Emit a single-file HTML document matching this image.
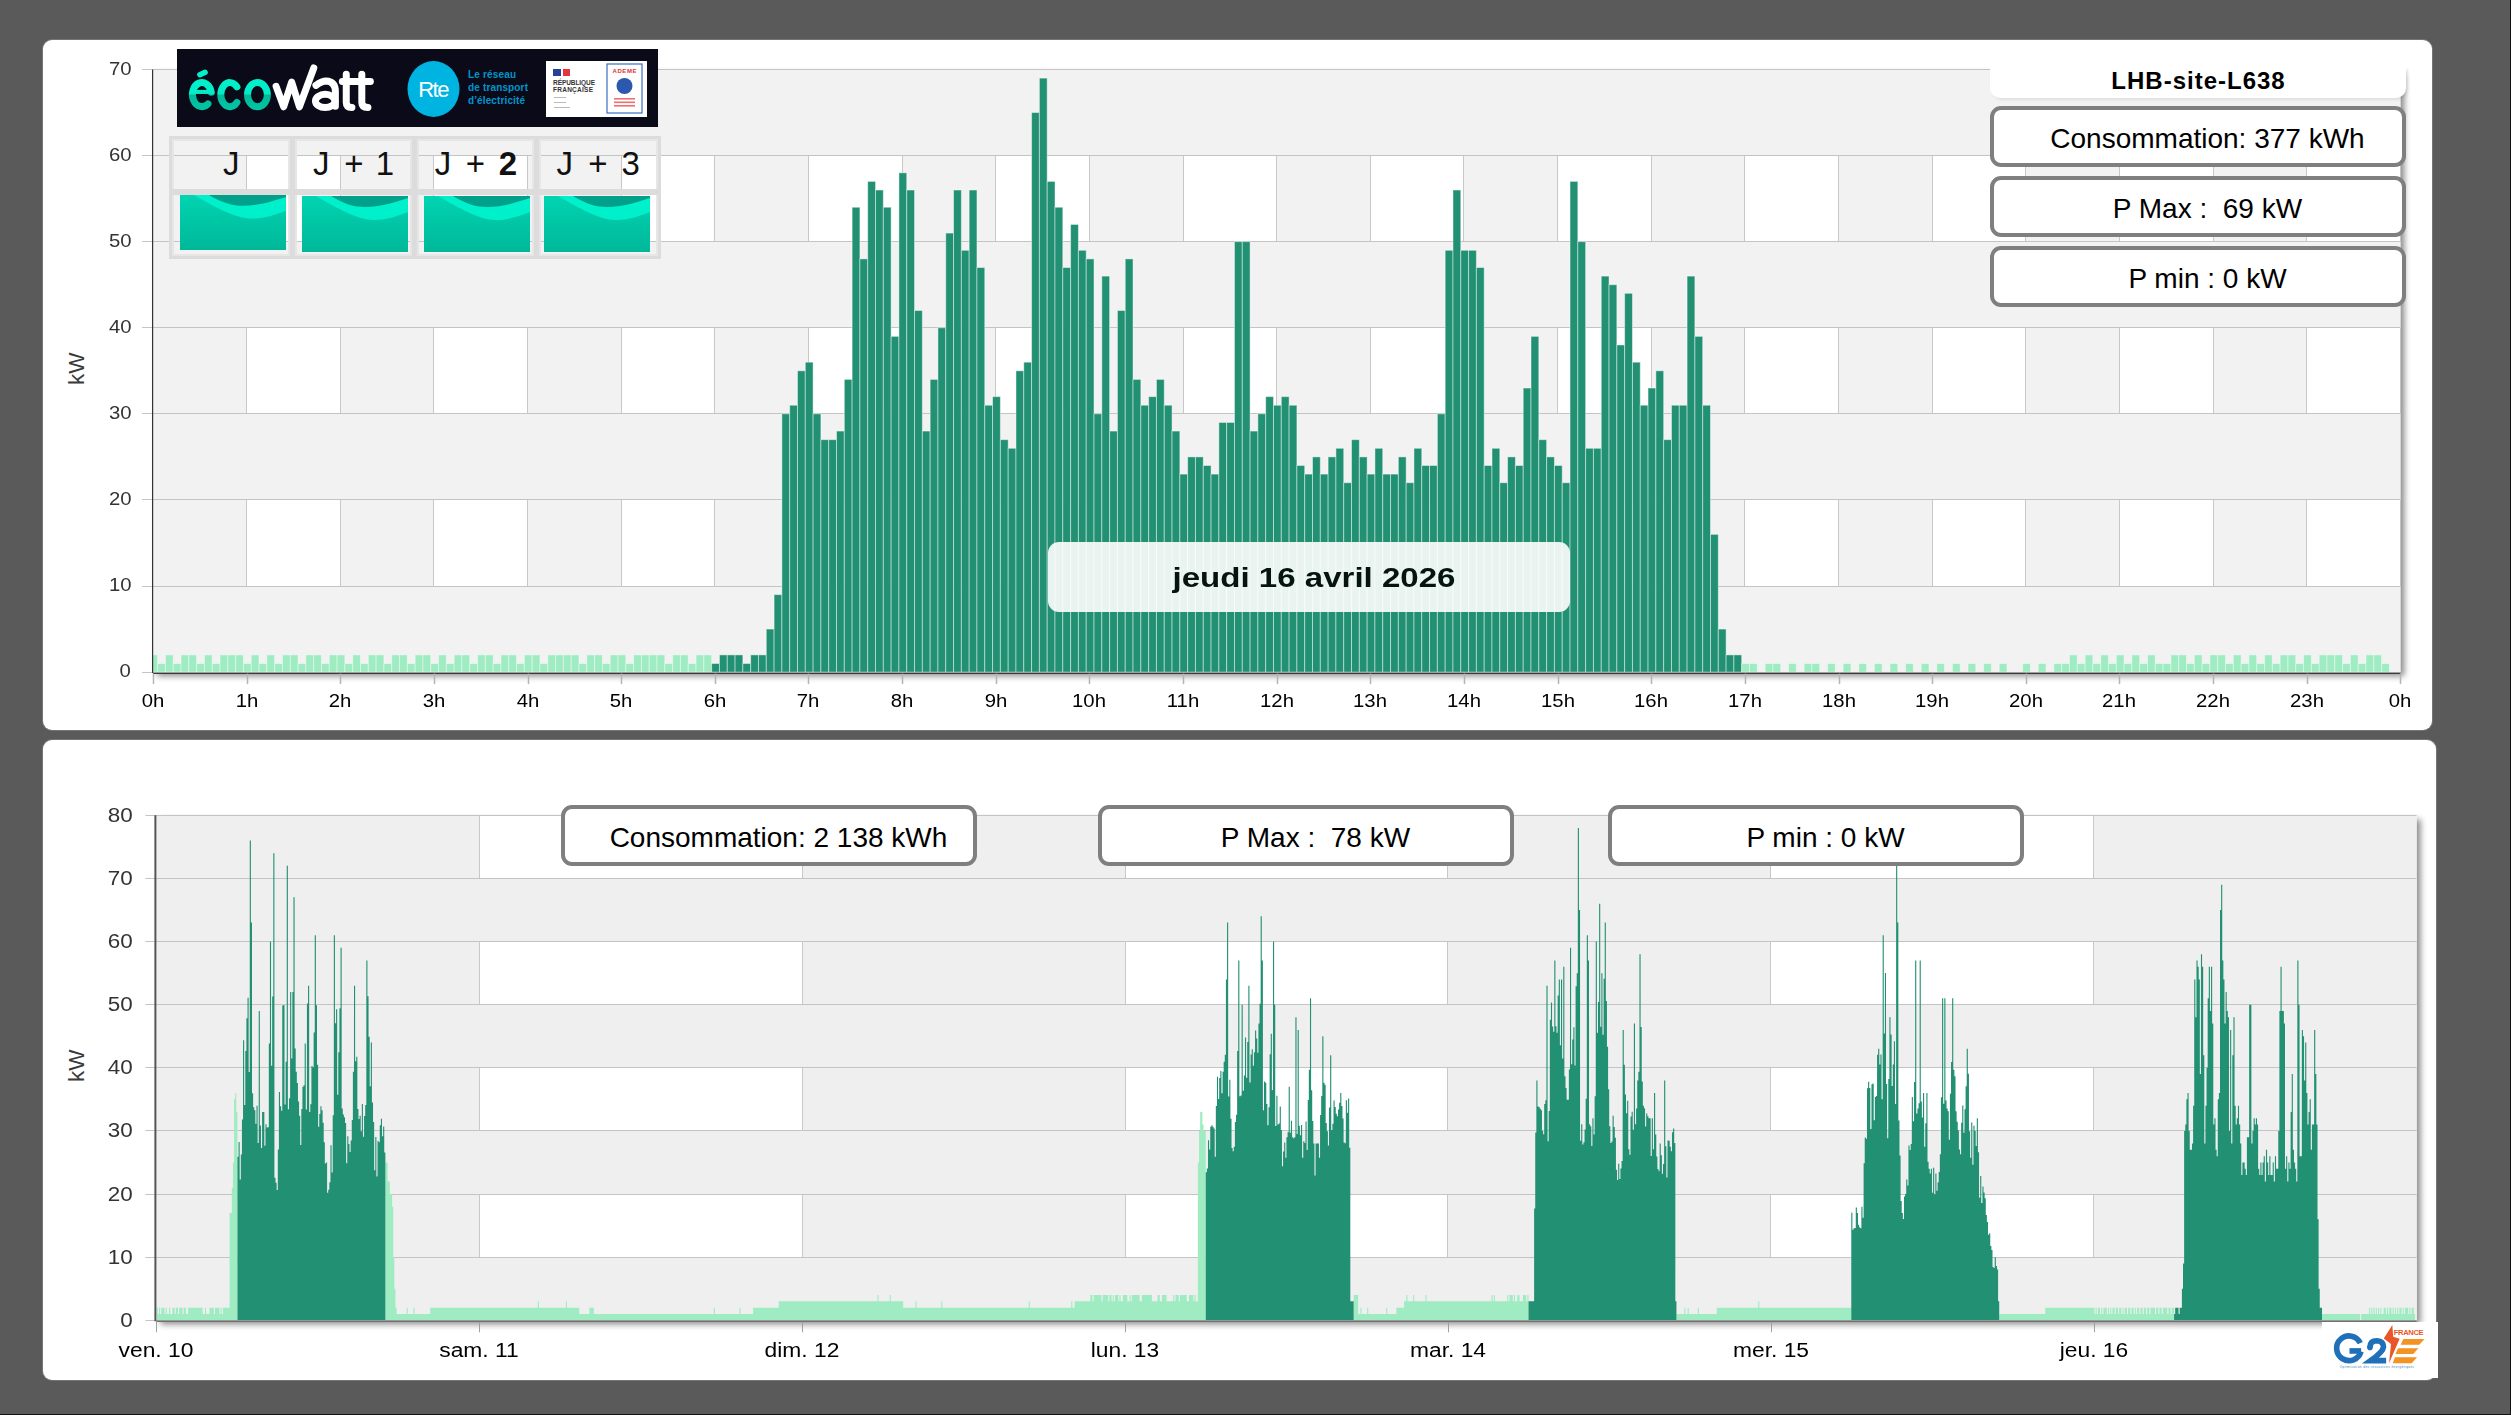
<!DOCTYPE html>
<html><head><meta charset="utf-8"><title>Consommation</title>
<style>
html,body{margin:0;padding:0;}
body{width:2511px;height:1415px;background:#5a5a5a;position:relative;overflow:hidden;font-family:"Liberation Sans",sans-serif;}
.panel{position:absolute;background:#fff;border-radius:9px;box-shadow:0 0 0 1px rgba(140,140,140,0.55);}
.abs{position:absolute;}
.box{position:absolute;box-sizing:border-box;border:4px solid #7f7f7f;border-radius:11px;background:#fff;text-align:center;color:#000;font-size:27px;}
.lbl{position:absolute;font-size:18px;color:#333;white-space:nowrap;}
</style></head><body>

<div class="abs" style="left:0;top:1414px;width:2511px;height:1px;background:#111"></div>
<div class="abs" style="left:2510px;top:0;width:1px;height:1415px;background:#111"></div>
<div class="panel" style="left:43px;top:40px;width:2389px;height:690px"></div>
<div class="panel" style="left:43px;top:740px;width:2393px;height:640px"></div>
<svg class="abs" style="left:0;top:0" width="2511" height="740"><defs><filter id="sh" x="-0.05" y="-0.05" width="1.1" height="1.2"><feGaussianBlur stdDeviation="3"/></filter><clipPath id="tc"><rect x="153" y="69.5" width="2247.4" height="602.6"/></clipPath></defs><rect x="157" y="73.5" width="2247.4" height="602.6" fill="#000" opacity="0.45" filter="url(#sh)"/><rect x="153" y="69.5" width="2247.4" height="602.6" fill="#fff"/><rect x="153" y="69.5" width="93.64" height="602.6" fill="#f2f2f2"/><rect x="340.28" y="69.5" width="93.64" height="602.6" fill="#f2f2f2"/><rect x="527.57" y="69.5" width="93.64" height="602.6" fill="#f2f2f2"/><rect x="714.85" y="69.5" width="93.64" height="602.6" fill="#f2f2f2"/><rect x="902.13" y="69.5" width="93.64" height="602.6" fill="#f2f2f2"/><rect x="1089.42" y="69.5" width="93.64" height="602.6" fill="#f2f2f2"/><rect x="1276.7" y="69.5" width="93.64" height="602.6" fill="#f2f2f2"/><rect x="1463.98" y="69.5" width="93.64" height="602.6" fill="#f2f2f2"/><rect x="1651.27" y="69.5" width="93.64" height="602.6" fill="#f2f2f2"/><rect x="1838.55" y="69.5" width="93.64" height="602.6" fill="#f2f2f2"/><rect x="2025.83" y="69.5" width="93.64" height="602.6" fill="#f2f2f2"/><rect x="2213.12" y="69.5" width="93.64" height="602.6" fill="#f2f2f2"/><line x1="246.5" y1="69.5" x2="246.5" y2="672.1" stroke="#c8c8c8" stroke-width="1"/><line x1="340.5" y1="69.5" x2="340.5" y2="672.1" stroke="#c8c8c8" stroke-width="1"/><line x1="433.5" y1="69.5" x2="433.5" y2="672.1" stroke="#c8c8c8" stroke-width="1"/><line x1="527.5" y1="69.5" x2="527.5" y2="672.1" stroke="#c8c8c8" stroke-width="1"/><line x1="621.5" y1="69.5" x2="621.5" y2="672.1" stroke="#c8c8c8" stroke-width="1"/><line x1="714.5" y1="69.5" x2="714.5" y2="672.1" stroke="#c8c8c8" stroke-width="1"/><line x1="808.5" y1="69.5" x2="808.5" y2="672.1" stroke="#c8c8c8" stroke-width="1"/><line x1="902.5" y1="69.5" x2="902.5" y2="672.1" stroke="#c8c8c8" stroke-width="1"/><line x1="995.5" y1="69.5" x2="995.5" y2="672.1" stroke="#c8c8c8" stroke-width="1"/><line x1="1089.5" y1="69.5" x2="1089.5" y2="672.1" stroke="#c8c8c8" stroke-width="1"/><line x1="1183.5" y1="69.5" x2="1183.5" y2="672.1" stroke="#c8c8c8" stroke-width="1"/><line x1="1276.5" y1="69.5" x2="1276.5" y2="672.1" stroke="#c8c8c8" stroke-width="1"/><line x1="1370.5" y1="69.5" x2="1370.5" y2="672.1" stroke="#c8c8c8" stroke-width="1"/><line x1="1463.5" y1="69.5" x2="1463.5" y2="672.1" stroke="#c8c8c8" stroke-width="1"/><line x1="1557.5" y1="69.5" x2="1557.5" y2="672.1" stroke="#c8c8c8" stroke-width="1"/><line x1="1651.5" y1="69.5" x2="1651.5" y2="672.1" stroke="#c8c8c8" stroke-width="1"/><line x1="1744.5" y1="69.5" x2="1744.5" y2="672.1" stroke="#c8c8c8" stroke-width="1"/><line x1="1838.5" y1="69.5" x2="1838.5" y2="672.1" stroke="#c8c8c8" stroke-width="1"/><line x1="1932.5" y1="69.5" x2="1932.5" y2="672.1" stroke="#c8c8c8" stroke-width="1"/><line x1="2025.5" y1="69.5" x2="2025.5" y2="672.1" stroke="#c8c8c8" stroke-width="1"/><line x1="2119.5" y1="69.5" x2="2119.5" y2="672.1" stroke="#c8c8c8" stroke-width="1"/><line x1="2213.5" y1="69.5" x2="2213.5" y2="672.1" stroke="#c8c8c8" stroke-width="1"/><line x1="2306.5" y1="69.5" x2="2306.5" y2="672.1" stroke="#c8c8c8" stroke-width="1"/><rect x="153" y="586.01" width="2247.4" height="86.09" fill="#f2f2f2"/><rect x="153" y="413.84" width="2247.4" height="86.09" fill="#f2f2f2"/><rect x="153" y="241.67" width="2247.4" height="86.09" fill="#f2f2f2"/><rect x="153" y="69.5" width="2247.4" height="86.09" fill="#f2f2f2"/><line x1="142" y1="672.5" x2="2400.4" y2="672.5" stroke="#c4c4c4" stroke-width="1"/><line x1="142" y1="586.5" x2="2400.4" y2="586.5" stroke="#c4c4c4" stroke-width="1"/><line x1="142" y1="499.5" x2="2400.4" y2="499.5" stroke="#c4c4c4" stroke-width="1"/><line x1="142" y1="413.5" x2="2400.4" y2="413.5" stroke="#c4c4c4" stroke-width="1"/><line x1="142" y1="327.5" x2="2400.4" y2="327.5" stroke="#c4c4c4" stroke-width="1"/><line x1="142" y1="241.5" x2="2400.4" y2="241.5" stroke="#c4c4c4" stroke-width="1"/><line x1="142" y1="155.5" x2="2400.4" y2="155.5" stroke="#c4c4c4" stroke-width="1"/><line x1="142" y1="69.5" x2="2400.4" y2="69.5" stroke="#c4c4c4" stroke-width="1"/><g clip-path="url(#tc)"><rect x="149.8" y="654.88" width="7.8" height="17.22" fill="#a0ecc2" stroke="rgba(255,255,255,0.4)" stroke-width="1"/><rect x="157.6" y="663.49" width="7.8" height="8.61" fill="#a0ecc2" stroke="rgba(255,255,255,0.4)" stroke-width="1"/><rect x="165.41" y="654.88" width="7.8" height="17.22" fill="#a0ecc2" stroke="rgba(255,255,255,0.4)" stroke-width="1"/><rect x="173.21" y="663.49" width="7.8" height="8.61" fill="#a0ecc2" stroke="rgba(255,255,255,0.4)" stroke-width="1"/><rect x="181.01" y="654.88" width="7.8" height="17.22" fill="#a0ecc2" stroke="rgba(255,255,255,0.4)" stroke-width="1"/><rect x="188.82" y="654.88" width="7.8" height="17.22" fill="#a0ecc2" stroke="rgba(255,255,255,0.4)" stroke-width="1"/><rect x="196.62" y="663.49" width="7.8" height="8.61" fill="#a0ecc2" stroke="rgba(255,255,255,0.4)" stroke-width="1"/><rect x="204.42" y="654.88" width="7.8" height="17.22" fill="#a0ecc2" stroke="rgba(255,255,255,0.4)" stroke-width="1"/><rect x="212.23" y="663.49" width="7.8" height="8.61" fill="#a0ecc2" stroke="rgba(255,255,255,0.4)" stroke-width="1"/><rect x="220.03" y="654.88" width="7.8" height="17.22" fill="#a0ecc2" stroke="rgba(255,255,255,0.4)" stroke-width="1"/><rect x="227.83" y="654.88" width="7.8" height="17.22" fill="#a0ecc2" stroke="rgba(255,255,255,0.4)" stroke-width="1"/><rect x="235.64" y="654.88" width="7.8" height="17.22" fill="#a0ecc2" stroke="rgba(255,255,255,0.4)" stroke-width="1"/><rect x="243.44" y="663.49" width="7.8" height="8.61" fill="#a0ecc2" stroke="rgba(255,255,255,0.4)" stroke-width="1"/><rect x="251.24" y="654.88" width="7.8" height="17.22" fill="#a0ecc2" stroke="rgba(255,255,255,0.4)" stroke-width="1"/><rect x="259.05" y="663.49" width="7.8" height="8.61" fill="#a0ecc2" stroke="rgba(255,255,255,0.4)" stroke-width="1"/><rect x="266.85" y="654.88" width="7.8" height="17.22" fill="#a0ecc2" stroke="rgba(255,255,255,0.4)" stroke-width="1"/><rect x="274.65" y="663.49" width="7.8" height="8.61" fill="#a0ecc2" stroke="rgba(255,255,255,0.4)" stroke-width="1"/><rect x="282.46" y="654.88" width="7.8" height="17.22" fill="#a0ecc2" stroke="rgba(255,255,255,0.4)" stroke-width="1"/><rect x="290.26" y="654.88" width="7.8" height="17.22" fill="#a0ecc2" stroke="rgba(255,255,255,0.4)" stroke-width="1"/><rect x="298.06" y="663.49" width="7.8" height="8.61" fill="#a0ecc2" stroke="rgba(255,255,255,0.4)" stroke-width="1"/><rect x="305.87" y="654.88" width="7.8" height="17.22" fill="#a0ecc2" stroke="rgba(255,255,255,0.4)" stroke-width="1"/><rect x="313.67" y="654.88" width="7.8" height="17.22" fill="#a0ecc2" stroke="rgba(255,255,255,0.4)" stroke-width="1"/><rect x="321.47" y="663.49" width="7.8" height="8.61" fill="#a0ecc2" stroke="rgba(255,255,255,0.4)" stroke-width="1"/><rect x="329.28" y="654.88" width="7.8" height="17.22" fill="#a0ecc2" stroke="rgba(255,255,255,0.4)" stroke-width="1"/><rect x="337.08" y="654.88" width="7.8" height="17.22" fill="#a0ecc2" stroke="rgba(255,255,255,0.4)" stroke-width="1"/><rect x="344.89" y="663.49" width="7.8" height="8.61" fill="#a0ecc2" stroke="rgba(255,255,255,0.4)" stroke-width="1"/><rect x="352.69" y="654.88" width="7.8" height="17.22" fill="#a0ecc2" stroke="rgba(255,255,255,0.4)" stroke-width="1"/><rect x="360.49" y="663.49" width="7.8" height="8.61" fill="#a0ecc2" stroke="rgba(255,255,255,0.4)" stroke-width="1"/><rect x="368.3" y="654.88" width="7.8" height="17.22" fill="#a0ecc2" stroke="rgba(255,255,255,0.4)" stroke-width="1"/><rect x="376.1" y="654.88" width="7.8" height="17.22" fill="#a0ecc2" stroke="rgba(255,255,255,0.4)" stroke-width="1"/><rect x="383.9" y="663.49" width="7.8" height="8.61" fill="#a0ecc2" stroke="rgba(255,255,255,0.4)" stroke-width="1"/><rect x="391.71" y="654.88" width="7.8" height="17.22" fill="#a0ecc2" stroke="rgba(255,255,255,0.4)" stroke-width="1"/><rect x="399.51" y="654.88" width="7.8" height="17.22" fill="#a0ecc2" stroke="rgba(255,255,255,0.4)" stroke-width="1"/><rect x="407.31" y="663.49" width="7.8" height="8.61" fill="#a0ecc2" stroke="rgba(255,255,255,0.4)" stroke-width="1"/><rect x="415.12" y="654.88" width="7.8" height="17.22" fill="#a0ecc2" stroke="rgba(255,255,255,0.4)" stroke-width="1"/><rect x="422.92" y="654.88" width="7.8" height="17.22" fill="#a0ecc2" stroke="rgba(255,255,255,0.4)" stroke-width="1"/><rect x="430.72" y="663.49" width="7.8" height="8.61" fill="#a0ecc2" stroke="rgba(255,255,255,0.4)" stroke-width="1"/><rect x="438.53" y="654.88" width="7.8" height="17.22" fill="#a0ecc2" stroke="rgba(255,255,255,0.4)" stroke-width="1"/><rect x="446.33" y="663.49" width="7.8" height="8.61" fill="#a0ecc2" stroke="rgba(255,255,255,0.4)" stroke-width="1"/><rect x="454.13" y="654.88" width="7.8" height="17.22" fill="#a0ecc2" stroke="rgba(255,255,255,0.4)" stroke-width="1"/><rect x="461.94" y="654.88" width="7.8" height="17.22" fill="#a0ecc2" stroke="rgba(255,255,255,0.4)" stroke-width="1"/><rect x="469.74" y="663.49" width="7.8" height="8.61" fill="#a0ecc2" stroke="rgba(255,255,255,0.4)" stroke-width="1"/><rect x="477.54" y="654.88" width="7.8" height="17.22" fill="#a0ecc2" stroke="rgba(255,255,255,0.4)" stroke-width="1"/><rect x="485.35" y="654.88" width="7.8" height="17.22" fill="#a0ecc2" stroke="rgba(255,255,255,0.4)" stroke-width="1"/><rect x="493.15" y="663.49" width="7.8" height="8.61" fill="#a0ecc2" stroke="rgba(255,255,255,0.4)" stroke-width="1"/><rect x="500.95" y="654.88" width="7.8" height="17.22" fill="#a0ecc2" stroke="rgba(255,255,255,0.4)" stroke-width="1"/><rect x="508.76" y="654.88" width="7.8" height="17.22" fill="#a0ecc2" stroke="rgba(255,255,255,0.4)" stroke-width="1"/><rect x="516.56" y="663.49" width="7.8" height="8.61" fill="#a0ecc2" stroke="rgba(255,255,255,0.4)" stroke-width="1"/><rect x="524.36" y="654.88" width="7.8" height="17.22" fill="#a0ecc2" stroke="rgba(255,255,255,0.4)" stroke-width="1"/><rect x="532.17" y="654.88" width="7.8" height="17.22" fill="#a0ecc2" stroke="rgba(255,255,255,0.4)" stroke-width="1"/><rect x="539.97" y="663.49" width="7.8" height="8.61" fill="#a0ecc2" stroke="rgba(255,255,255,0.4)" stroke-width="1"/><rect x="547.78" y="654.88" width="7.8" height="17.22" fill="#a0ecc2" stroke="rgba(255,255,255,0.4)" stroke-width="1"/><rect x="555.58" y="654.88" width="7.8" height="17.22" fill="#a0ecc2" stroke="rgba(255,255,255,0.4)" stroke-width="1"/><rect x="563.38" y="654.88" width="7.8" height="17.22" fill="#a0ecc2" stroke="rgba(255,255,255,0.4)" stroke-width="1"/><rect x="571.19" y="654.88" width="7.8" height="17.22" fill="#a0ecc2" stroke="rgba(255,255,255,0.4)" stroke-width="1"/><rect x="578.99" y="663.49" width="7.8" height="8.61" fill="#a0ecc2" stroke="rgba(255,255,255,0.4)" stroke-width="1"/><rect x="586.79" y="654.88" width="7.8" height="17.22" fill="#a0ecc2" stroke="rgba(255,255,255,0.4)" stroke-width="1"/><rect x="594.6" y="654.88" width="7.8" height="17.22" fill="#a0ecc2" stroke="rgba(255,255,255,0.4)" stroke-width="1"/><rect x="602.4" y="663.49" width="7.8" height="8.61" fill="#a0ecc2" stroke="rgba(255,255,255,0.4)" stroke-width="1"/><rect x="610.2" y="654.88" width="7.8" height="17.22" fill="#a0ecc2" stroke="rgba(255,255,255,0.4)" stroke-width="1"/><rect x="618.01" y="654.88" width="7.8" height="17.22" fill="#a0ecc2" stroke="rgba(255,255,255,0.4)" stroke-width="1"/><rect x="625.81" y="663.49" width="7.8" height="8.61" fill="#a0ecc2" stroke="rgba(255,255,255,0.4)" stroke-width="1"/><rect x="633.61" y="654.88" width="7.8" height="17.22" fill="#a0ecc2" stroke="rgba(255,255,255,0.4)" stroke-width="1"/><rect x="641.42" y="654.88" width="7.8" height="17.22" fill="#a0ecc2" stroke="rgba(255,255,255,0.4)" stroke-width="1"/><rect x="649.22" y="654.88" width="7.8" height="17.22" fill="#a0ecc2" stroke="rgba(255,255,255,0.4)" stroke-width="1"/><rect x="657.02" y="654.88" width="7.8" height="17.22" fill="#a0ecc2" stroke="rgba(255,255,255,0.4)" stroke-width="1"/><rect x="664.83" y="663.49" width="7.8" height="8.61" fill="#a0ecc2" stroke="rgba(255,255,255,0.4)" stroke-width="1"/><rect x="672.63" y="654.88" width="7.8" height="17.22" fill="#a0ecc2" stroke="rgba(255,255,255,0.4)" stroke-width="1"/><rect x="680.43" y="654.88" width="7.8" height="17.22" fill="#a0ecc2" stroke="rgba(255,255,255,0.4)" stroke-width="1"/><rect x="688.24" y="663.49" width="7.8" height="8.61" fill="#a0ecc2" stroke="rgba(255,255,255,0.4)" stroke-width="1"/><rect x="696.04" y="654.88" width="7.8" height="17.22" fill="#a0ecc2" stroke="rgba(255,255,255,0.4)" stroke-width="1"/><rect x="703.84" y="654.88" width="7.8" height="17.22" fill="#a0ecc2" stroke="rgba(255,255,255,0.4)" stroke-width="1"/><rect x="711.65" y="663.49" width="7.8" height="8.61" fill="#229072" stroke="rgba(255,255,255,0.45)" stroke-width="1"/><rect x="719.45" y="654.88" width="7.8" height="17.22" fill="#229072" stroke="rgba(255,255,255,0.45)" stroke-width="1"/><rect x="727.26" y="654.88" width="7.8" height="17.22" fill="#229072" stroke="rgba(255,255,255,0.45)" stroke-width="1"/><rect x="735.06" y="654.88" width="7.8" height="17.22" fill="#229072" stroke="rgba(255,255,255,0.45)" stroke-width="1"/><rect x="742.86" y="663.49" width="7.8" height="8.61" fill="#229072" stroke="rgba(255,255,255,0.45)" stroke-width="1"/><rect x="750.67" y="654.88" width="7.8" height="17.22" fill="#229072" stroke="rgba(255,255,255,0.45)" stroke-width="1"/><rect x="758.47" y="654.88" width="7.8" height="17.22" fill="#229072" stroke="rgba(255,255,255,0.45)" stroke-width="1"/><rect x="766.27" y="629.06" width="7.8" height="43.04" fill="#229072" stroke="rgba(255,255,255,0.45)" stroke-width="1"/><rect x="774.08" y="594.62" width="7.8" height="77.48" fill="#229072" stroke="rgba(255,255,255,0.45)" stroke-width="1"/><rect x="781.88" y="413.84" width="7.8" height="258.26" fill="#229072" stroke="rgba(255,255,255,0.45)" stroke-width="1"/><rect x="789.68" y="405.23" width="7.8" height="266.87" fill="#229072" stroke="rgba(255,255,255,0.45)" stroke-width="1"/><rect x="797.49" y="370.8" width="7.8" height="301.3" fill="#229072" stroke="rgba(255,255,255,0.45)" stroke-width="1"/><rect x="805.29" y="362.19" width="7.8" height="309.91" fill="#229072" stroke="rgba(255,255,255,0.45)" stroke-width="1"/><rect x="813.09" y="413.84" width="7.8" height="258.26" fill="#229072" stroke="rgba(255,255,255,0.45)" stroke-width="1"/><rect x="820.9" y="439.67" width="7.8" height="232.43" fill="#229072" stroke="rgba(255,255,255,0.45)" stroke-width="1"/><rect x="828.7" y="439.67" width="7.8" height="232.43" fill="#229072" stroke="rgba(255,255,255,0.45)" stroke-width="1"/><rect x="836.5" y="431.06" width="7.8" height="241.04" fill="#229072" stroke="rgba(255,255,255,0.45)" stroke-width="1"/><rect x="844.31" y="379.41" width="7.8" height="292.69" fill="#229072" stroke="rgba(255,255,255,0.45)" stroke-width="1"/><rect x="852.11" y="207.24" width="7.8" height="464.86" fill="#229072" stroke="rgba(255,255,255,0.45)" stroke-width="1"/><rect x="859.91" y="258.89" width="7.8" height="413.21" fill="#229072" stroke="rgba(255,255,255,0.45)" stroke-width="1"/><rect x="867.72" y="181.41" width="7.8" height="490.69" fill="#229072" stroke="rgba(255,255,255,0.45)" stroke-width="1"/><rect x="875.52" y="190.02" width="7.8" height="482.08" fill="#229072" stroke="rgba(255,255,255,0.45)" stroke-width="1"/><rect x="883.32" y="207.24" width="7.8" height="464.86" fill="#229072" stroke="rgba(255,255,255,0.45)" stroke-width="1"/><rect x="891.13" y="336.37" width="7.8" height="335.73" fill="#229072" stroke="rgba(255,255,255,0.45)" stroke-width="1"/><rect x="898.93" y="172.8" width="7.8" height="499.3" fill="#229072" stroke="rgba(255,255,255,0.45)" stroke-width="1"/><rect x="906.74" y="190.02" width="7.8" height="482.08" fill="#229072" stroke="rgba(255,255,255,0.45)" stroke-width="1"/><rect x="914.54" y="310.54" width="7.8" height="361.56" fill="#229072" stroke="rgba(255,255,255,0.45)" stroke-width="1"/><rect x="922.34" y="431.06" width="7.8" height="241.04" fill="#229072" stroke="rgba(255,255,255,0.45)" stroke-width="1"/><rect x="930.15" y="379.41" width="7.8" height="292.69" fill="#229072" stroke="rgba(255,255,255,0.45)" stroke-width="1"/><rect x="937.95" y="327.76" width="7.8" height="344.34" fill="#229072" stroke="rgba(255,255,255,0.45)" stroke-width="1"/><rect x="945.75" y="233.06" width="7.8" height="439.04" fill="#229072" stroke="rgba(255,255,255,0.45)" stroke-width="1"/><rect x="953.56" y="190.02" width="7.8" height="482.08" fill="#229072" stroke="rgba(255,255,255,0.45)" stroke-width="1"/><rect x="961.36" y="250.28" width="7.8" height="421.82" fill="#229072" stroke="rgba(255,255,255,0.45)" stroke-width="1"/><rect x="969.16" y="190.02" width="7.8" height="482.08" fill="#229072" stroke="rgba(255,255,255,0.45)" stroke-width="1"/><rect x="976.97" y="267.5" width="7.8" height="404.6" fill="#229072" stroke="rgba(255,255,255,0.45)" stroke-width="1"/><rect x="984.77" y="405.23" width="7.8" height="266.87" fill="#229072" stroke="rgba(255,255,255,0.45)" stroke-width="1"/><rect x="992.57" y="396.63" width="7.8" height="275.47" fill="#229072" stroke="rgba(255,255,255,0.45)" stroke-width="1"/><rect x="1000.38" y="439.67" width="7.8" height="232.43" fill="#229072" stroke="rgba(255,255,255,0.45)" stroke-width="1"/><rect x="1008.18" y="448.28" width="7.8" height="223.82" fill="#229072" stroke="rgba(255,255,255,0.45)" stroke-width="1"/><rect x="1015.98" y="370.8" width="7.8" height="301.3" fill="#229072" stroke="rgba(255,255,255,0.45)" stroke-width="1"/><rect x="1023.79" y="362.19" width="7.8" height="309.91" fill="#229072" stroke="rgba(255,255,255,0.45)" stroke-width="1"/><rect x="1031.59" y="112.54" width="7.8" height="559.56" fill="#229072" stroke="rgba(255,255,255,0.45)" stroke-width="1"/><rect x="1039.39" y="78.11" width="7.8" height="593.99" fill="#229072" stroke="rgba(255,255,255,0.45)" stroke-width="1"/><rect x="1047.2" y="181.41" width="7.8" height="490.69" fill="#229072" stroke="rgba(255,255,255,0.45)" stroke-width="1"/><rect x="1055" y="207.24" width="7.8" height="464.86" fill="#229072" stroke="rgba(255,255,255,0.45)" stroke-width="1"/><rect x="1062.8" y="267.5" width="7.8" height="404.6" fill="#229072" stroke="rgba(255,255,255,0.45)" stroke-width="1"/><rect x="1070.61" y="224.45" width="7.8" height="447.65" fill="#229072" stroke="rgba(255,255,255,0.45)" stroke-width="1"/><rect x="1078.41" y="250.28" width="7.8" height="421.82" fill="#229072" stroke="rgba(255,255,255,0.45)" stroke-width="1"/><rect x="1086.21" y="258.89" width="7.8" height="413.21" fill="#229072" stroke="rgba(255,255,255,0.45)" stroke-width="1"/><rect x="1094.02" y="413.84" width="7.8" height="258.26" fill="#229072" stroke="rgba(255,255,255,0.45)" stroke-width="1"/><rect x="1101.82" y="276.11" width="7.8" height="395.99" fill="#229072" stroke="rgba(255,255,255,0.45)" stroke-width="1"/><rect x="1109.63" y="431.06" width="7.8" height="241.04" fill="#229072" stroke="rgba(255,255,255,0.45)" stroke-width="1"/><rect x="1117.43" y="310.54" width="7.8" height="361.56" fill="#229072" stroke="rgba(255,255,255,0.45)" stroke-width="1"/><rect x="1125.23" y="258.89" width="7.8" height="413.21" fill="#229072" stroke="rgba(255,255,255,0.45)" stroke-width="1"/><rect x="1133.04" y="379.41" width="7.8" height="292.69" fill="#229072" stroke="rgba(255,255,255,0.45)" stroke-width="1"/><rect x="1140.84" y="405.23" width="7.8" height="266.87" fill="#229072" stroke="rgba(255,255,255,0.45)" stroke-width="1"/><rect x="1148.64" y="396.63" width="7.8" height="275.47" fill="#229072" stroke="rgba(255,255,255,0.45)" stroke-width="1"/><rect x="1156.45" y="379.41" width="7.8" height="292.69" fill="#229072" stroke="rgba(255,255,255,0.45)" stroke-width="1"/><rect x="1164.25" y="405.23" width="7.8" height="266.87" fill="#229072" stroke="rgba(255,255,255,0.45)" stroke-width="1"/><rect x="1172.05" y="431.06" width="7.8" height="241.04" fill="#229072" stroke="rgba(255,255,255,0.45)" stroke-width="1"/><rect x="1179.86" y="474.1" width="7.8" height="198" fill="#229072" stroke="rgba(255,255,255,0.45)" stroke-width="1"/><rect x="1187.66" y="456.89" width="7.8" height="215.21" fill="#229072" stroke="rgba(255,255,255,0.45)" stroke-width="1"/><rect x="1195.46" y="456.89" width="7.8" height="215.21" fill="#229072" stroke="rgba(255,255,255,0.45)" stroke-width="1"/><rect x="1203.27" y="465.49" width="7.8" height="206.61" fill="#229072" stroke="rgba(255,255,255,0.45)" stroke-width="1"/><rect x="1211.07" y="474.1" width="7.8" height="198" fill="#229072" stroke="rgba(255,255,255,0.45)" stroke-width="1"/><rect x="1218.87" y="422.45" width="7.8" height="249.65" fill="#229072" stroke="rgba(255,255,255,0.45)" stroke-width="1"/><rect x="1226.68" y="422.45" width="7.8" height="249.65" fill="#229072" stroke="rgba(255,255,255,0.45)" stroke-width="1"/><rect x="1234.48" y="241.67" width="7.8" height="430.43" fill="#229072" stroke="rgba(255,255,255,0.45)" stroke-width="1"/><rect x="1242.28" y="241.67" width="7.8" height="430.43" fill="#229072" stroke="rgba(255,255,255,0.45)" stroke-width="1"/><rect x="1250.09" y="431.06" width="7.8" height="241.04" fill="#229072" stroke="rgba(255,255,255,0.45)" stroke-width="1"/><rect x="1257.89" y="413.84" width="7.8" height="258.26" fill="#229072" stroke="rgba(255,255,255,0.45)" stroke-width="1"/><rect x="1265.69" y="396.63" width="7.8" height="275.47" fill="#229072" stroke="rgba(255,255,255,0.45)" stroke-width="1"/><rect x="1273.5" y="405.23" width="7.8" height="266.87" fill="#229072" stroke="rgba(255,255,255,0.45)" stroke-width="1"/><rect x="1281.3" y="396.63" width="7.8" height="275.47" fill="#229072" stroke="rgba(255,255,255,0.45)" stroke-width="1"/><rect x="1289.11" y="405.23" width="7.8" height="266.87" fill="#229072" stroke="rgba(255,255,255,0.45)" stroke-width="1"/><rect x="1296.91" y="465.49" width="7.8" height="206.61" fill="#229072" stroke="rgba(255,255,255,0.45)" stroke-width="1"/><rect x="1304.71" y="474.1" width="7.8" height="198" fill="#229072" stroke="rgba(255,255,255,0.45)" stroke-width="1"/><rect x="1312.52" y="456.89" width="7.8" height="215.21" fill="#229072" stroke="rgba(255,255,255,0.45)" stroke-width="1"/><rect x="1320.32" y="474.1" width="7.8" height="198" fill="#229072" stroke="rgba(255,255,255,0.45)" stroke-width="1"/><rect x="1328.12" y="456.89" width="7.8" height="215.21" fill="#229072" stroke="rgba(255,255,255,0.45)" stroke-width="1"/><rect x="1335.93" y="448.28" width="7.8" height="223.82" fill="#229072" stroke="rgba(255,255,255,0.45)" stroke-width="1"/><rect x="1343.73" y="482.71" width="7.8" height="189.39" fill="#229072" stroke="rgba(255,255,255,0.45)" stroke-width="1"/><rect x="1351.53" y="439.67" width="7.8" height="232.43" fill="#229072" stroke="rgba(255,255,255,0.45)" stroke-width="1"/><rect x="1359.34" y="456.89" width="7.8" height="215.21" fill="#229072" stroke="rgba(255,255,255,0.45)" stroke-width="1"/><rect x="1367.14" y="474.1" width="7.8" height="198" fill="#229072" stroke="rgba(255,255,255,0.45)" stroke-width="1"/><rect x="1374.94" y="448.28" width="7.8" height="223.82" fill="#229072" stroke="rgba(255,255,255,0.45)" stroke-width="1"/><rect x="1382.75" y="474.1" width="7.8" height="198" fill="#229072" stroke="rgba(255,255,255,0.45)" stroke-width="1"/><rect x="1390.55" y="474.1" width="7.8" height="198" fill="#229072" stroke="rgba(255,255,255,0.45)" stroke-width="1"/><rect x="1398.35" y="456.89" width="7.8" height="215.21" fill="#229072" stroke="rgba(255,255,255,0.45)" stroke-width="1"/><rect x="1406.16" y="482.71" width="7.8" height="189.39" fill="#229072" stroke="rgba(255,255,255,0.45)" stroke-width="1"/><rect x="1413.96" y="448.28" width="7.8" height="223.82" fill="#229072" stroke="rgba(255,255,255,0.45)" stroke-width="1"/><rect x="1421.76" y="465.49" width="7.8" height="206.61" fill="#229072" stroke="rgba(255,255,255,0.45)" stroke-width="1"/><rect x="1429.57" y="465.49" width="7.8" height="206.61" fill="#229072" stroke="rgba(255,255,255,0.45)" stroke-width="1"/><rect x="1437.37" y="413.84" width="7.8" height="258.26" fill="#229072" stroke="rgba(255,255,255,0.45)" stroke-width="1"/><rect x="1445.17" y="250.28" width="7.8" height="421.82" fill="#229072" stroke="rgba(255,255,255,0.45)" stroke-width="1"/><rect x="1452.98" y="190.02" width="7.8" height="482.08" fill="#229072" stroke="rgba(255,255,255,0.45)" stroke-width="1"/><rect x="1460.78" y="250.28" width="7.8" height="421.82" fill="#229072" stroke="rgba(255,255,255,0.45)" stroke-width="1"/><rect x="1468.59" y="250.28" width="7.8" height="421.82" fill="#229072" stroke="rgba(255,255,255,0.45)" stroke-width="1"/><rect x="1476.39" y="267.5" width="7.8" height="404.6" fill="#229072" stroke="rgba(255,255,255,0.45)" stroke-width="1"/><rect x="1484.19" y="465.49" width="7.8" height="206.61" fill="#229072" stroke="rgba(255,255,255,0.45)" stroke-width="1"/><rect x="1492" y="448.28" width="7.8" height="223.82" fill="#229072" stroke="rgba(255,255,255,0.45)" stroke-width="1"/><rect x="1499.8" y="482.71" width="7.8" height="189.39" fill="#229072" stroke="rgba(255,255,255,0.45)" stroke-width="1"/><rect x="1507.6" y="456.89" width="7.8" height="215.21" fill="#229072" stroke="rgba(255,255,255,0.45)" stroke-width="1"/><rect x="1515.41" y="465.49" width="7.8" height="206.61" fill="#229072" stroke="rgba(255,255,255,0.45)" stroke-width="1"/><rect x="1523.21" y="388.02" width="7.8" height="284.08" fill="#229072" stroke="rgba(255,255,255,0.45)" stroke-width="1"/><rect x="1531.01" y="336.37" width="7.8" height="335.73" fill="#229072" stroke="rgba(255,255,255,0.45)" stroke-width="1"/><rect x="1538.82" y="439.67" width="7.8" height="232.43" fill="#229072" stroke="rgba(255,255,255,0.45)" stroke-width="1"/><rect x="1546.62" y="456.89" width="7.8" height="215.21" fill="#229072" stroke="rgba(255,255,255,0.45)" stroke-width="1"/><rect x="1554.42" y="465.49" width="7.8" height="206.61" fill="#229072" stroke="rgba(255,255,255,0.45)" stroke-width="1"/><rect x="1562.23" y="482.71" width="7.8" height="189.39" fill="#229072" stroke="rgba(255,255,255,0.45)" stroke-width="1"/><rect x="1570.03" y="181.41" width="7.8" height="490.69" fill="#229072" stroke="rgba(255,255,255,0.45)" stroke-width="1"/><rect x="1577.83" y="241.67" width="7.8" height="430.43" fill="#229072" stroke="rgba(255,255,255,0.45)" stroke-width="1"/><rect x="1585.64" y="448.28" width="7.8" height="223.82" fill="#229072" stroke="rgba(255,255,255,0.45)" stroke-width="1"/><rect x="1593.44" y="448.28" width="7.8" height="223.82" fill="#229072" stroke="rgba(255,255,255,0.45)" stroke-width="1"/><rect x="1601.24" y="276.11" width="7.8" height="395.99" fill="#229072" stroke="rgba(255,255,255,0.45)" stroke-width="1"/><rect x="1609.05" y="284.71" width="7.8" height="387.39" fill="#229072" stroke="rgba(255,255,255,0.45)" stroke-width="1"/><rect x="1616.85" y="344.97" width="7.8" height="327.13" fill="#229072" stroke="rgba(255,255,255,0.45)" stroke-width="1"/><rect x="1624.65" y="293.32" width="7.8" height="378.78" fill="#229072" stroke="rgba(255,255,255,0.45)" stroke-width="1"/><rect x="1632.46" y="362.19" width="7.8" height="309.91" fill="#229072" stroke="rgba(255,255,255,0.45)" stroke-width="1"/><rect x="1640.26" y="405.23" width="7.8" height="266.87" fill="#229072" stroke="rgba(255,255,255,0.45)" stroke-width="1"/><rect x="1648.06" y="388.02" width="7.8" height="284.08" fill="#229072" stroke="rgba(255,255,255,0.45)" stroke-width="1"/><rect x="1655.87" y="370.8" width="7.8" height="301.3" fill="#229072" stroke="rgba(255,255,255,0.45)" stroke-width="1"/><rect x="1663.67" y="439.67" width="7.8" height="232.43" fill="#229072" stroke="rgba(255,255,255,0.45)" stroke-width="1"/><rect x="1671.48" y="405.23" width="7.8" height="266.87" fill="#229072" stroke="rgba(255,255,255,0.45)" stroke-width="1"/><rect x="1679.28" y="405.23" width="7.8" height="266.87" fill="#229072" stroke="rgba(255,255,255,0.45)" stroke-width="1"/><rect x="1687.08" y="276.11" width="7.8" height="395.99" fill="#229072" stroke="rgba(255,255,255,0.45)" stroke-width="1"/><rect x="1694.89" y="336.37" width="7.8" height="335.73" fill="#229072" stroke="rgba(255,255,255,0.45)" stroke-width="1"/><rect x="1702.69" y="405.23" width="7.8" height="266.87" fill="#229072" stroke="rgba(255,255,255,0.45)" stroke-width="1"/><rect x="1710.49" y="534.36" width="7.8" height="137.74" fill="#229072" stroke="rgba(255,255,255,0.45)" stroke-width="1"/><rect x="1718.3" y="629.06" width="7.8" height="43.04" fill="#229072" stroke="rgba(255,255,255,0.45)" stroke-width="1"/><rect x="1726.1" y="654.88" width="7.8" height="17.22" fill="#229072" stroke="rgba(255,255,255,0.45)" stroke-width="1"/><rect x="1733.9" y="654.88" width="7.8" height="17.22" fill="#229072" stroke="rgba(255,255,255,0.45)" stroke-width="1"/><rect x="1741.71" y="663.49" width="7.8" height="8.61" fill="#a0ecc2" stroke="rgba(255,255,255,0.4)" stroke-width="1"/><rect x="1749.51" y="663.49" width="7.8" height="8.61" fill="#a0ecc2" stroke="rgba(255,255,255,0.4)" stroke-width="1"/><rect x="1765.12" y="663.49" width="7.8" height="8.61" fill="#a0ecc2" stroke="rgba(255,255,255,0.4)" stroke-width="1"/><rect x="1772.92" y="663.49" width="7.8" height="8.61" fill="#a0ecc2" stroke="rgba(255,255,255,0.4)" stroke-width="1"/><rect x="1788.53" y="663.49" width="7.8" height="8.61" fill="#a0ecc2" stroke="rgba(255,255,255,0.4)" stroke-width="1"/><rect x="1804.13" y="663.49" width="7.8" height="8.61" fill="#a0ecc2" stroke="rgba(255,255,255,0.4)" stroke-width="1"/><rect x="1811.94" y="663.49" width="7.8" height="8.61" fill="#a0ecc2" stroke="rgba(255,255,255,0.4)" stroke-width="1"/><rect x="1827.54" y="663.49" width="7.8" height="8.61" fill="#a0ecc2" stroke="rgba(255,255,255,0.4)" stroke-width="1"/><rect x="1843.15" y="663.49" width="7.8" height="8.61" fill="#a0ecc2" stroke="rgba(255,255,255,0.4)" stroke-width="1"/><rect x="1858.76" y="663.49" width="7.8" height="8.61" fill="#a0ecc2" stroke="rgba(255,255,255,0.4)" stroke-width="1"/><rect x="1874.37" y="663.49" width="7.8" height="8.61" fill="#a0ecc2" stroke="rgba(255,255,255,0.4)" stroke-width="1"/><rect x="1889.97" y="663.49" width="7.8" height="8.61" fill="#a0ecc2" stroke="rgba(255,255,255,0.4)" stroke-width="1"/><rect x="1905.58" y="663.49" width="7.8" height="8.61" fill="#a0ecc2" stroke="rgba(255,255,255,0.4)" stroke-width="1"/><rect x="1921.19" y="663.49" width="7.8" height="8.61" fill="#a0ecc2" stroke="rgba(255,255,255,0.4)" stroke-width="1"/><rect x="1936.79" y="663.49" width="7.8" height="8.61" fill="#a0ecc2" stroke="rgba(255,255,255,0.4)" stroke-width="1"/><rect x="1952.4" y="663.49" width="7.8" height="8.61" fill="#a0ecc2" stroke="rgba(255,255,255,0.4)" stroke-width="1"/><rect x="1968.01" y="663.49" width="7.8" height="8.61" fill="#a0ecc2" stroke="rgba(255,255,255,0.4)" stroke-width="1"/><rect x="1983.61" y="663.49" width="7.8" height="8.61" fill="#a0ecc2" stroke="rgba(255,255,255,0.4)" stroke-width="1"/><rect x="1999.22" y="663.49" width="7.8" height="8.61" fill="#a0ecc2" stroke="rgba(255,255,255,0.4)" stroke-width="1"/><rect x="2022.63" y="663.49" width="7.8" height="8.61" fill="#a0ecc2" stroke="rgba(255,255,255,0.4)" stroke-width="1"/><rect x="2038.24" y="663.49" width="7.8" height="8.61" fill="#a0ecc2" stroke="rgba(255,255,255,0.4)" stroke-width="1"/><rect x="2053.85" y="663.49" width="7.8" height="8.61" fill="#a0ecc2" stroke="rgba(255,255,255,0.4)" stroke-width="1"/><rect x="2061.65" y="663.49" width="7.8" height="8.61" fill="#a0ecc2" stroke="rgba(255,255,255,0.4)" stroke-width="1"/><rect x="2069.45" y="654.88" width="7.8" height="17.22" fill="#a0ecc2" stroke="rgba(255,255,255,0.4)" stroke-width="1"/><rect x="2077.26" y="663.49" width="7.8" height="8.61" fill="#a0ecc2" stroke="rgba(255,255,255,0.4)" stroke-width="1"/><rect x="2085.06" y="654.88" width="7.8" height="17.22" fill="#a0ecc2" stroke="rgba(255,255,255,0.4)" stroke-width="1"/><rect x="2092.86" y="663.49" width="7.8" height="8.61" fill="#a0ecc2" stroke="rgba(255,255,255,0.4)" stroke-width="1"/><rect x="2100.67" y="654.88" width="7.8" height="17.22" fill="#a0ecc2" stroke="rgba(255,255,255,0.4)" stroke-width="1"/><rect x="2108.47" y="663.49" width="7.8" height="8.61" fill="#a0ecc2" stroke="rgba(255,255,255,0.4)" stroke-width="1"/><rect x="2116.27" y="654.88" width="7.8" height="17.22" fill="#a0ecc2" stroke="rgba(255,255,255,0.4)" stroke-width="1"/><rect x="2124.08" y="663.49" width="7.8" height="8.61" fill="#a0ecc2" stroke="rgba(255,255,255,0.4)" stroke-width="1"/><rect x="2131.88" y="654.88" width="7.8" height="17.22" fill="#a0ecc2" stroke="rgba(255,255,255,0.4)" stroke-width="1"/><rect x="2139.68" y="663.49" width="7.8" height="8.61" fill="#a0ecc2" stroke="rgba(255,255,255,0.4)" stroke-width="1"/><rect x="2147.49" y="654.88" width="7.8" height="17.22" fill="#a0ecc2" stroke="rgba(255,255,255,0.4)" stroke-width="1"/><rect x="2155.29" y="663.49" width="7.8" height="8.61" fill="#a0ecc2" stroke="rgba(255,255,255,0.4)" stroke-width="1"/><rect x="2163.09" y="663.49" width="7.8" height="8.61" fill="#a0ecc2" stroke="rgba(255,255,255,0.4)" stroke-width="1"/><rect x="2170.9" y="654.88" width="7.8" height="17.22" fill="#a0ecc2" stroke="rgba(255,255,255,0.4)" stroke-width="1"/><rect x="2178.7" y="654.88" width="7.8" height="17.22" fill="#a0ecc2" stroke="rgba(255,255,255,0.4)" stroke-width="1"/><rect x="2186.5" y="663.49" width="7.8" height="8.61" fill="#a0ecc2" stroke="rgba(255,255,255,0.4)" stroke-width="1"/><rect x="2194.31" y="654.88" width="7.8" height="17.22" fill="#a0ecc2" stroke="rgba(255,255,255,0.4)" stroke-width="1"/><rect x="2202.11" y="663.49" width="7.8" height="8.61" fill="#a0ecc2" stroke="rgba(255,255,255,0.4)" stroke-width="1"/><rect x="2209.91" y="654.88" width="7.8" height="17.22" fill="#a0ecc2" stroke="rgba(255,255,255,0.4)" stroke-width="1"/><rect x="2217.72" y="654.88" width="7.8" height="17.22" fill="#a0ecc2" stroke="rgba(255,255,255,0.4)" stroke-width="1"/><rect x="2225.52" y="663.49" width="7.8" height="8.61" fill="#a0ecc2" stroke="rgba(255,255,255,0.4)" stroke-width="1"/><rect x="2233.33" y="654.88" width="7.8" height="17.22" fill="#a0ecc2" stroke="rgba(255,255,255,0.4)" stroke-width="1"/><rect x="2241.13" y="663.49" width="7.8" height="8.61" fill="#a0ecc2" stroke="rgba(255,255,255,0.4)" stroke-width="1"/><rect x="2248.93" y="654.88" width="7.8" height="17.22" fill="#a0ecc2" stroke="rgba(255,255,255,0.4)" stroke-width="1"/><rect x="2256.74" y="663.49" width="7.8" height="8.61" fill="#a0ecc2" stroke="rgba(255,255,255,0.4)" stroke-width="1"/><rect x="2264.54" y="654.88" width="7.8" height="17.22" fill="#a0ecc2" stroke="rgba(255,255,255,0.4)" stroke-width="1"/><rect x="2272.34" y="663.49" width="7.8" height="8.61" fill="#a0ecc2" stroke="rgba(255,255,255,0.4)" stroke-width="1"/><rect x="2280.15" y="654.88" width="7.8" height="17.22" fill="#a0ecc2" stroke="rgba(255,255,255,0.4)" stroke-width="1"/><rect x="2287.95" y="654.88" width="7.8" height="17.22" fill="#a0ecc2" stroke="rgba(255,255,255,0.4)" stroke-width="1"/><rect x="2295.75" y="663.49" width="7.8" height="8.61" fill="#a0ecc2" stroke="rgba(255,255,255,0.4)" stroke-width="1"/><rect x="2303.56" y="654.88" width="7.8" height="17.22" fill="#a0ecc2" stroke="rgba(255,255,255,0.4)" stroke-width="1"/><rect x="2311.36" y="663.49" width="7.8" height="8.61" fill="#a0ecc2" stroke="rgba(255,255,255,0.4)" stroke-width="1"/><rect x="2319.16" y="654.88" width="7.8" height="17.22" fill="#a0ecc2" stroke="rgba(255,255,255,0.4)" stroke-width="1"/><rect x="2326.97" y="654.88" width="7.8" height="17.22" fill="#a0ecc2" stroke="rgba(255,255,255,0.4)" stroke-width="1"/><rect x="2334.77" y="654.88" width="7.8" height="17.22" fill="#a0ecc2" stroke="rgba(255,255,255,0.4)" stroke-width="1"/><rect x="2342.57" y="663.49" width="7.8" height="8.61" fill="#a0ecc2" stroke="rgba(255,255,255,0.4)" stroke-width="1"/><rect x="2350.38" y="654.88" width="7.8" height="17.22" fill="#a0ecc2" stroke="rgba(255,255,255,0.4)" stroke-width="1"/><rect x="2358.18" y="663.49" width="7.8" height="8.61" fill="#a0ecc2" stroke="rgba(255,255,255,0.4)" stroke-width="1"/><rect x="2365.98" y="654.88" width="7.8" height="17.22" fill="#a0ecc2" stroke="rgba(255,255,255,0.4)" stroke-width="1"/><rect x="2373.79" y="654.88" width="7.8" height="17.22" fill="#a0ecc2" stroke="rgba(255,255,255,0.4)" stroke-width="1"/><rect x="2381.59" y="663.49" width="7.8" height="8.61" fill="#a0ecc2" stroke="rgba(255,255,255,0.4)" stroke-width="1"/></g><line x1="152.6" y1="69.5" x2="152.6" y2="673.1" stroke="#333" stroke-width="1.2"/><line x1="153" y1="673.4" x2="2400.4" y2="673.4" stroke="#3a3a3a" stroke-width="1.4"/><line x1="153.5" y1="673.6" x2="153.5" y2="684.1" stroke="#b4b4b4" stroke-width="1.5"/><line x1="247.5" y1="673.6" x2="247.5" y2="684.1" stroke="#b4b4b4" stroke-width="1.5"/><line x1="340.5" y1="673.6" x2="340.5" y2="684.1" stroke="#b4b4b4" stroke-width="1.5"/><line x1="434.5" y1="673.6" x2="434.5" y2="684.1" stroke="#b4b4b4" stroke-width="1.5"/><line x1="528.5" y1="673.6" x2="528.5" y2="684.1" stroke="#b4b4b4" stroke-width="1.5"/><line x1="621.5" y1="673.6" x2="621.5" y2="684.1" stroke="#b4b4b4" stroke-width="1.5"/><line x1="715.5" y1="673.6" x2="715.5" y2="684.1" stroke="#b4b4b4" stroke-width="1.5"/><line x1="808.5" y1="673.6" x2="808.5" y2="684.1" stroke="#b4b4b4" stroke-width="1.5"/><line x1="902.5" y1="673.6" x2="902.5" y2="684.1" stroke="#b4b4b4" stroke-width="1.5"/><line x1="996.5" y1="673.6" x2="996.5" y2="684.1" stroke="#b4b4b4" stroke-width="1.5"/><line x1="1089.5" y1="673.6" x2="1089.5" y2="684.1" stroke="#b4b4b4" stroke-width="1.5"/><line x1="1183.5" y1="673.6" x2="1183.5" y2="684.1" stroke="#b4b4b4" stroke-width="1.5"/><line x1="1277.5" y1="673.6" x2="1277.5" y2="684.1" stroke="#b4b4b4" stroke-width="1.5"/><line x1="1370.5" y1="673.6" x2="1370.5" y2="684.1" stroke="#b4b4b4" stroke-width="1.5"/><line x1="1464.5" y1="673.6" x2="1464.5" y2="684.1" stroke="#b4b4b4" stroke-width="1.5"/><line x1="1558.5" y1="673.6" x2="1558.5" y2="684.1" stroke="#b4b4b4" stroke-width="1.5"/><line x1="1651.5" y1="673.6" x2="1651.5" y2="684.1" stroke="#b4b4b4" stroke-width="1.5"/><line x1="1745.5" y1="673.6" x2="1745.5" y2="684.1" stroke="#b4b4b4" stroke-width="1.5"/><line x1="1839.5" y1="673.6" x2="1839.5" y2="684.1" stroke="#b4b4b4" stroke-width="1.5"/><line x1="1932.5" y1="673.6" x2="1932.5" y2="684.1" stroke="#b4b4b4" stroke-width="1.5"/><line x1="2026.5" y1="673.6" x2="2026.5" y2="684.1" stroke="#b4b4b4" stroke-width="1.5"/><line x1="2119.5" y1="673.6" x2="2119.5" y2="684.1" stroke="#b4b4b4" stroke-width="1.5"/><line x1="2213.5" y1="673.6" x2="2213.5" y2="684.1" stroke="#b4b4b4" stroke-width="1.5"/><line x1="2307.5" y1="673.6" x2="2307.5" y2="684.1" stroke="#b4b4b4" stroke-width="1.5"/><line x1="2400.5" y1="673.6" x2="2400.5" y2="684.1" stroke="#b4b4b4" stroke-width="1.5"/></svg>
<div class="lbl" style="right:2380px;top:662.1px;line-height:18px;font-size:17.5px;transform:scaleX(1.16);transform-origin:100% 50%">0</div>
<div class="lbl" style="right:2380px;top:576.01px;line-height:18px;font-size:17.5px;transform:scaleX(1.16);transform-origin:100% 50%">10</div>
<div class="lbl" style="right:2380px;top:489.93px;line-height:18px;font-size:17.5px;transform:scaleX(1.16);transform-origin:100% 50%">20</div>
<div class="lbl" style="right:2380px;top:403.84px;line-height:18px;font-size:17.5px;transform:scaleX(1.16);transform-origin:100% 50%">30</div>
<div class="lbl" style="right:2380px;top:317.76px;line-height:18px;font-size:17.5px;transform:scaleX(1.16);transform-origin:100% 50%">40</div>
<div class="lbl" style="right:2380px;top:231.67px;line-height:18px;font-size:17.5px;transform:scaleX(1.16);transform-origin:100% 50%">50</div>
<div class="lbl" style="right:2380px;top:145.59px;line-height:18px;font-size:17.5px;transform:scaleX(1.16);transform-origin:100% 50%">60</div>
<div class="lbl" style="right:2380px;top:59.5px;line-height:18px;font-size:17.5px;transform:scaleX(1.16);transform-origin:100% 50%">70</div>
<div class="lbl" style="left:123px;top:692px;width:60px;text-align:center;color:#000;font-size:17.5px;line-height:18px;transform:scaleX(1.16)">0h</div>
<div class="lbl" style="left:216.64px;top:692px;width:60px;text-align:center;color:#000;font-size:17.5px;line-height:18px;transform:scaleX(1.16)">1h</div>
<div class="lbl" style="left:310.28px;top:692px;width:60px;text-align:center;color:#000;font-size:17.5px;line-height:18px;transform:scaleX(1.16)">2h</div>
<div class="lbl" style="left:403.93px;top:692px;width:60px;text-align:center;color:#000;font-size:17.5px;line-height:18px;transform:scaleX(1.16)">3h</div>
<div class="lbl" style="left:497.57px;top:692px;width:60px;text-align:center;color:#000;font-size:17.5px;line-height:18px;transform:scaleX(1.16)">4h</div>
<div class="lbl" style="left:591.21px;top:692px;width:60px;text-align:center;color:#000;font-size:17.5px;line-height:18px;transform:scaleX(1.16)">5h</div>
<div class="lbl" style="left:684.85px;top:692px;width:60px;text-align:center;color:#000;font-size:17.5px;line-height:18px;transform:scaleX(1.16)">6h</div>
<div class="lbl" style="left:778.49px;top:692px;width:60px;text-align:center;color:#000;font-size:17.5px;line-height:18px;transform:scaleX(1.16)">7h</div>
<div class="lbl" style="left:872.13px;top:692px;width:60px;text-align:center;color:#000;font-size:17.5px;line-height:18px;transform:scaleX(1.16)">8h</div>
<div class="lbl" style="left:965.77px;top:692px;width:60px;text-align:center;color:#000;font-size:17.5px;line-height:18px;transform:scaleX(1.16)">9h</div>
<div class="lbl" style="left:1059.42px;top:692px;width:60px;text-align:center;color:#000;font-size:17.5px;line-height:18px;transform:scaleX(1.16)">10h</div>
<div class="lbl" style="left:1153.06px;top:692px;width:60px;text-align:center;color:#000;font-size:17.5px;line-height:18px;transform:scaleX(1.16)">11h</div>
<div class="lbl" style="left:1246.7px;top:692px;width:60px;text-align:center;color:#000;font-size:17.5px;line-height:18px;transform:scaleX(1.16)">12h</div>
<div class="lbl" style="left:1340.34px;top:692px;width:60px;text-align:center;color:#000;font-size:17.5px;line-height:18px;transform:scaleX(1.16)">13h</div>
<div class="lbl" style="left:1433.98px;top:692px;width:60px;text-align:center;color:#000;font-size:17.5px;line-height:18px;transform:scaleX(1.16)">14h</div>
<div class="lbl" style="left:1527.62px;top:692px;width:60px;text-align:center;color:#000;font-size:17.5px;line-height:18px;transform:scaleX(1.16)">15h</div>
<div class="lbl" style="left:1621.27px;top:692px;width:60px;text-align:center;color:#000;font-size:17.5px;line-height:18px;transform:scaleX(1.16)">16h</div>
<div class="lbl" style="left:1714.91px;top:692px;width:60px;text-align:center;color:#000;font-size:17.5px;line-height:18px;transform:scaleX(1.16)">17h</div>
<div class="lbl" style="left:1808.55px;top:692px;width:60px;text-align:center;color:#000;font-size:17.5px;line-height:18px;transform:scaleX(1.16)">18h</div>
<div class="lbl" style="left:1902.19px;top:692px;width:60px;text-align:center;color:#000;font-size:17.5px;line-height:18px;transform:scaleX(1.16)">19h</div>
<div class="lbl" style="left:1995.83px;top:692px;width:60px;text-align:center;color:#000;font-size:17.5px;line-height:18px;transform:scaleX(1.16)">20h</div>
<div class="lbl" style="left:2089.47px;top:692px;width:60px;text-align:center;color:#000;font-size:17.5px;line-height:18px;transform:scaleX(1.16)">21h</div>
<div class="lbl" style="left:2183.12px;top:692px;width:60px;text-align:center;color:#000;font-size:17.5px;line-height:18px;transform:scaleX(1.16)">22h</div>
<div class="lbl" style="left:2276.76px;top:692px;width:60px;text-align:center;color:#000;font-size:17.5px;line-height:18px;transform:scaleX(1.16)">23h</div>
<div class="lbl" style="left:2370.4px;top:692px;width:60px;text-align:center;color:#000;font-size:17.5px;line-height:18px;transform:scaleX(1.16)">0h</div>
<div class="lbl" style="left:62px;top:358px;width:30px;height:24px;line-height:24px;text-align:center;transform:rotate(-90deg);font-size:22.5px;color:#3a3a3a">kW</div>
<svg class="abs" style="left:0;top:740px" width="2511" height="675"><defs><filter id="sh2" x="-0.05" y="-0.05" width="1.1" height="1.2"><feGaussianBlur stdDeviation="3"/></filter><clipPath id="bc"><rect x="156.4" y="75.3" width="2260.2" height="505"/></clipPath></defs><rect x="160.4" y="79.3" width="2260.2" height="505" fill="#000" opacity="0.45" filter="url(#sh2)"/><rect x="156.4" y="75.3" width="2260.2" height="505" fill="#fff"/><rect x="156.4" y="75.3" width="322.89" height="505" fill="#efefef"/><rect x="802.17" y="75.3" width="322.89" height="505" fill="#efefef"/><rect x="1447.94" y="75.3" width="322.89" height="505" fill="#efefef"/><rect x="2093.71" y="75.3" width="322.89" height="505" fill="#efefef"/><line x1="479.5" y1="75.3" x2="479.5" y2="580.3" stroke="#c8c8c8" stroke-width="1"/><line x1="802.5" y1="75.3" x2="802.5" y2="580.3" stroke="#c8c8c8" stroke-width="1"/><line x1="1125.5" y1="75.3" x2="1125.5" y2="580.3" stroke="#c8c8c8" stroke-width="1"/><line x1="1447.5" y1="75.3" x2="1447.5" y2="580.3" stroke="#c8c8c8" stroke-width="1"/><line x1="1770.5" y1="75.3" x2="1770.5" y2="580.3" stroke="#c8c8c8" stroke-width="1"/><line x1="2093.5" y1="75.3" x2="2093.5" y2="580.3" stroke="#c8c8c8" stroke-width="1"/><rect x="156.4" y="517.17" width="2260.2" height="63.12" fill="#efefef"/><rect x="156.4" y="390.92" width="2260.2" height="63.12" fill="#efefef"/><rect x="156.4" y="264.67" width="2260.2" height="63.12" fill="#efefef"/><rect x="156.4" y="138.42" width="2260.2" height="63.12" fill="#efefef"/><line x1="145.4" y1="580.5" x2="2416.6" y2="580.5" stroke="#c4c4c4" stroke-width="1"/><line x1="145.4" y1="517.5" x2="2416.6" y2="517.5" stroke="#c4c4c4" stroke-width="1"/><line x1="145.4" y1="454.5" x2="2416.6" y2="454.5" stroke="#c4c4c4" stroke-width="1"/><line x1="145.4" y1="390.5" x2="2416.6" y2="390.5" stroke="#c4c4c4" stroke-width="1"/><line x1="145.4" y1="327.5" x2="2416.6" y2="327.5" stroke="#c4c4c4" stroke-width="1"/><line x1="145.4" y1="264.5" x2="2416.6" y2="264.5" stroke="#c4c4c4" stroke-width="1"/><line x1="145.4" y1="201.5" x2="2416.6" y2="201.5" stroke="#c4c4c4" stroke-width="1"/><line x1="145.4" y1="138.5" x2="2416.6" y2="138.5" stroke="#c4c4c4" stroke-width="1"/><line x1="145.4" y1="75.5" x2="2416.6" y2="75.5" stroke="#c4c4c4" stroke-width="1"/><g clip-path="url(#bc)"><path d="M156.74 580.3L156.74 567.67L157.86 567.67L157.86 573.99L158.98 573.99L158.98 567.67L160.1 567.67L160.1 573.99L161.22 573.99L161.22 567.67L162.34 567.67L162.34 567.67L163.46 567.67L163.46 567.67L164.58 567.67L164.58 573.99L165.71 573.99L165.71 567.67L166.83 567.67L166.83 573.99L167.95 573.99L167.95 573.99L169.07 573.99L169.07 567.67L170.19 567.67L170.19 573.99L171.31 573.99L171.31 573.99L172.43 573.99L172.43 567.67L173.55 567.67L173.55 567.67L174.67 567.67L174.67 573.99L175.79 573.99L175.79 567.67L176.91 567.67L176.91 567.67L178.03 567.67L178.03 573.99L179.15 573.99L179.15 567.67L180.27 567.67L180.27 567.67L181.4 567.67L181.4 567.67L182.52 567.67L182.52 573.99L183.64 573.99L183.64 567.67L184.76 567.67L184.76 567.67L185.88 567.67L185.88 573.99L187 573.99L187 573.99L188.12 573.99L188.12 567.67L189.24 567.67L189.24 567.67L190.36 567.67L190.36 567.67L191.48 567.67L191.48 567.67L192.6 567.67L192.6 567.67L193.72 567.67L193.72 567.67L194.84 567.67L194.84 567.67L195.97 567.67L195.97 567.67L197.09 567.67L197.09 567.67L198.21 567.67L198.21 567.67L199.33 567.67L199.33 567.67L200.45 567.67L200.45 567.67L201.57 567.67L201.57 567.67L202.69 567.67L202.69 573.99L203.81 573.99L203.81 573.99L204.93 573.99L204.93 567.67L206.05 567.67L206.05 573.99L207.17 573.99L207.17 573.99L208.29 573.99L208.29 573.99L209.41 573.99L209.41 567.67L210.53 567.67L210.53 567.67L211.66 567.67L211.66 567.67L212.78 567.67L212.78 567.67L213.9 567.67L213.9 573.99L215.02 573.99L215.02 567.67L216.14 567.67L216.14 567.67L217.26 567.67L217.26 567.67L218.38 567.67L218.38 567.67L219.5 567.67L219.5 573.99L220.62 573.99L220.62 567.67L221.74 567.67L221.74 573.99L222.86 573.99L222.86 567.67L223.98 567.67L223.98 567.67L225.1 567.67L225.1 567.67L226.22 567.67L226.22 567.67L227.35 567.67L227.35 567.67L228.47 567.67L228.47 567.67L229.59 567.67L229.59 472.99L230.71 472.99L230.71 472.99L231.83 472.99L231.83 447.74L232.95 447.74L232.95 422.49L234.07 422.49L234.07 359.36L235.19 359.36L235.19 353.05L236.31 353.05L236.31 371.99L237.43 371.99L237.43 580.3ZM385.37 580.3L385.37 422.49L386.49 422.49L386.49 422.49L387.61 422.49L387.61 441.42L388.73 441.42L388.73 441.42L389.85 441.42L389.85 454.05L390.97 454.05L390.97 454.05L392.09 454.05L392.09 466.67L393.21 466.67L393.21 517.17L394.33 517.17L394.33 548.74L395.45 548.74L395.45 567.67L396.58 567.67L396.58 573.99L397.7 573.99L397.7 573.99L398.82 573.99L398.82 573.99L399.94 573.99L399.94 573.99L401.06 573.99L401.06 573.99L402.18 573.99L402.18 573.99L403.3 573.99L403.3 573.99L404.42 573.99L404.42 573.99L405.54 573.99L405.54 573.99L406.66 573.99L406.66 567.67L407.78 567.67L407.78 573.99L408.9 573.99L408.9 573.99L410.02 573.99L410.02 573.99L411.15 573.99L411.15 573.99L412.27 573.99L412.27 573.99L413.39 573.99L413.39 567.67L414.51 567.67L414.51 573.99L415.63 573.99L415.63 573.99L416.75 573.99L416.75 573.99L417.87 573.99L417.87 573.99L418.99 573.99L418.99 573.99L420.11 573.99L420.11 573.99L421.23 573.99L421.23 573.99L422.35 573.99L422.35 573.99L423.47 573.99L423.47 573.99L424.59 573.99L424.59 573.99L425.71 573.99L425.71 573.99L426.84 573.99L426.84 573.99L427.96 573.99L427.96 573.99L429.08 573.99L429.08 573.99L430.2 573.99L430.2 567.67L431.32 567.67L431.32 567.67L432.44 567.67L432.44 567.67L433.56 567.67L433.56 567.67L434.68 567.67L434.68 567.67L435.8 567.67L435.8 567.67L436.92 567.67L436.92 567.67L438.04 567.67L438.04 567.67L439.16 567.67L439.16 567.67L440.28 567.67L440.28 567.67L441.4 567.67L441.4 567.67L442.53 567.67L442.53 567.67L443.65 567.67L443.65 567.67L444.77 567.67L444.77 567.67L445.89 567.67L445.89 567.67L447.01 567.67L447.01 567.67L448.13 567.67L448.13 567.67L449.25 567.67L449.25 567.67L450.37 567.67L450.37 567.67L451.49 567.67L451.49 567.67L452.61 567.67L452.61 567.67L453.73 567.67L453.73 567.67L454.85 567.67L454.85 567.67L455.97 567.67L455.97 567.67L457.1 567.67L457.1 567.67L458.22 567.67L458.22 567.67L459.34 567.67L459.34 567.67L460.46 567.67L460.46 567.67L461.58 567.67L461.58 567.67L462.7 567.67L462.7 567.67L463.82 567.67L463.82 567.67L464.94 567.67L464.94 567.67L466.06 567.67L466.06 567.67L467.18 567.67L467.18 567.67L468.3 567.67L468.3 567.67L469.42 567.67L469.42 567.67L470.54 567.67L470.54 567.67L471.66 567.67L471.66 567.67L472.79 567.67L472.79 567.67L473.91 567.67L473.91 567.67L475.03 567.67L475.03 567.67L476.15 567.67L476.15 567.67L477.27 567.67L477.27 567.67L478.39 567.67L478.39 567.67L479.51 567.67L479.51 567.67L480.63 567.67L480.63 567.67L481.75 567.67L481.75 567.67L482.87 567.67L482.87 567.67L483.99 567.67L483.99 567.67L485.11 567.67L485.11 567.67L486.23 567.67L486.23 567.67L487.35 567.67L487.35 567.67L488.48 567.67L488.48 567.67L489.6 567.67L489.6 567.67L490.72 567.67L490.72 567.67L491.84 567.67L491.84 567.67L492.96 567.67L492.96 567.67L494.08 567.67L494.08 567.67L495.2 567.67L495.2 567.67L496.32 567.67L496.32 567.67L497.44 567.67L497.44 567.67L498.56 567.67L498.56 567.67L499.68 567.67L499.68 567.67L500.8 567.67L500.8 567.67L501.92 567.67L501.92 567.67L503.04 567.67L503.04 567.67L504.17 567.67L504.17 567.67L505.29 567.67L505.29 567.67L506.41 567.67L506.41 567.67L507.53 567.67L507.53 567.67L508.65 567.67L508.65 567.67L509.77 567.67L509.77 567.67L510.89 567.67L510.89 567.67L512.01 567.67L512.01 567.67L513.13 567.67L513.13 567.67L514.25 567.67L514.25 567.67L515.37 567.67L515.37 567.67L516.49 567.67L516.49 567.67L517.61 567.67L517.61 567.67L518.74 567.67L518.74 567.67L519.86 567.67L519.86 567.67L520.98 567.67L520.98 567.67L522.1 567.67L522.1 567.67L523.22 567.67L523.22 567.67L524.34 567.67L524.34 567.67L525.46 567.67L525.46 567.67L526.58 567.67L526.58 567.67L527.7 567.67L527.7 567.67L528.82 567.67L528.82 567.67L529.94 567.67L529.94 567.67L531.06 567.67L531.06 567.67L532.18 567.67L532.18 567.67L533.3 567.67L533.3 567.67L534.43 567.67L534.43 567.67L535.55 567.67L535.55 567.67L536.67 567.67L536.67 567.67L537.79 567.67L537.79 561.36L538.91 561.36L538.91 567.67L540.03 567.67L540.03 567.67L541.15 567.67L541.15 567.67L542.27 567.67L542.27 567.67L543.39 567.67L543.39 567.67L544.51 567.67L544.51 567.67L545.63 567.67L545.63 567.67L546.75 567.67L546.75 567.67L547.87 567.67L547.87 567.67L548.99 567.67L548.99 567.67L550.12 567.67L550.12 567.67L551.24 567.67L551.24 567.67L552.36 567.67L552.36 567.67L553.48 567.67L553.48 567.67L554.6 567.67L554.6 567.67L555.72 567.67L555.72 567.67L556.84 567.67L556.84 567.67L557.96 567.67L557.96 567.67L559.08 567.67L559.08 567.67L560.2 567.67L560.2 567.67L561.32 567.67L561.32 567.67L562.44 567.67L562.44 567.67L563.56 567.67L563.56 567.67L564.69 567.67L564.69 567.67L565.81 567.67L565.81 561.36L566.93 561.36L566.93 567.67L568.05 567.67L568.05 567.67L569.17 567.67L569.17 567.67L570.29 567.67L570.29 567.67L571.41 567.67L571.41 567.67L572.53 567.67L572.53 567.67L573.65 567.67L573.65 567.67L574.77 567.67L574.77 567.67L575.89 567.67L575.89 567.67L577.01 567.67L577.01 567.67L578.13 567.67L578.13 567.67L579.25 567.67L579.25 573.99L580.38 573.99L580.38 573.99L581.5 573.99L581.5 573.99L582.62 573.99L582.62 573.99L583.74 573.99L583.74 573.99L584.86 573.99L584.86 573.99L585.98 573.99L585.98 573.99L587.1 573.99L587.1 573.99L588.22 573.99L588.22 573.99L589.34 573.99L589.34 567.67L590.46 567.67L590.46 567.67L591.58 567.67L591.58 567.67L592.7 567.67L592.7 567.67L593.82 567.67L593.82 573.99L594.94 573.99L594.94 573.99L596.07 573.99L596.07 573.99L597.19 573.99L597.19 573.99L598.31 573.99L598.31 573.99L599.43 573.99L599.43 573.99L600.55 573.99L600.55 573.99L601.67 573.99L601.67 573.99L602.79 573.99L602.79 573.99L603.91 573.99L603.91 573.99L605.03 573.99L605.03 573.99L606.15 573.99L606.15 573.99L607.27 573.99L607.27 573.99L608.39 573.99L608.39 573.99L609.51 573.99L609.51 573.99L610.63 573.99L610.63 573.99L611.76 573.99L611.76 573.99L612.88 573.99L612.88 573.99L614 573.99L614 573.99L615.12 573.99L615.12 573.99L616.24 573.99L616.24 573.99L617.36 573.99L617.36 573.99L618.48 573.99L618.48 573.99L619.6 573.99L619.6 573.99L620.72 573.99L620.72 573.99L621.84 573.99L621.84 573.99L622.96 573.99L622.96 573.99L624.08 573.99L624.08 573.99L625.2 573.99L625.2 573.99L626.33 573.99L626.33 573.99L627.45 573.99L627.45 573.99L628.57 573.99L628.57 573.99L629.69 573.99L629.69 573.99L630.81 573.99L630.81 573.99L631.93 573.99L631.93 573.99L633.05 573.99L633.05 573.99L634.17 573.99L634.17 573.99L635.29 573.99L635.29 573.99L636.41 573.99L636.41 573.99L637.53 573.99L637.53 573.99L638.65 573.99L638.65 573.99L639.77 573.99L639.77 573.99L640.89 573.99L640.89 573.99L642.02 573.99L642.02 573.99L643.14 573.99L643.14 573.99L644.26 573.99L644.26 573.99L645.38 573.99L645.38 573.99L646.5 573.99L646.5 573.99L647.62 573.99L647.62 573.99L648.74 573.99L648.74 573.99L649.86 573.99L649.86 573.99L650.98 573.99L650.98 573.99L652.1 573.99L652.1 573.99L653.22 573.99L653.22 573.99L654.34 573.99L654.34 573.99L655.46 573.99L655.46 573.99L656.58 573.99L656.58 573.99L657.71 573.99L657.71 573.99L658.83 573.99L658.83 573.99L659.95 573.99L659.95 573.99L661.07 573.99L661.07 573.99L662.19 573.99L662.19 573.99L663.31 573.99L663.31 573.99L664.43 573.99L664.43 573.99L665.55 573.99L665.55 573.99L666.67 573.99L666.67 573.99L667.79 573.99L667.79 573.99L668.91 573.99L668.91 573.99L670.03 573.99L670.03 573.99L671.15 573.99L671.15 573.99L672.28 573.99L672.28 573.99L673.4 573.99L673.4 573.99L674.52 573.99L674.52 573.99L675.64 573.99L675.64 573.99L676.76 573.99L676.76 573.99L677.88 573.99L677.88 573.99L679 573.99L679 573.99L680.12 573.99L680.12 573.99L681.24 573.99L681.24 573.99L682.36 573.99L682.36 573.99L683.48 573.99L683.48 573.99L684.6 573.99L684.6 573.99L685.72 573.99L685.72 573.99L686.84 573.99L686.84 573.99L687.97 573.99L687.97 573.99L689.09 573.99L689.09 573.99L690.21 573.99L690.21 573.99L691.33 573.99L691.33 573.99L692.45 573.99L692.45 573.99L693.57 573.99L693.57 573.99L694.69 573.99L694.69 573.99L695.81 573.99L695.81 573.99L696.93 573.99L696.93 573.99L698.05 573.99L698.05 573.99L699.17 573.99L699.17 573.99L700.29 573.99L700.29 573.99L701.41 573.99L701.41 573.99L702.53 573.99L702.53 573.99L703.66 573.99L703.66 573.99L704.78 573.99L704.78 573.99L705.9 573.99L705.9 573.99L707.02 573.99L707.02 573.99L708.14 573.99L708.14 573.99L709.26 573.99L709.26 573.99L710.38 573.99L710.38 573.99L711.5 573.99L711.5 573.99L712.62 573.99L712.62 573.99L713.74 573.99L713.74 567.67L714.86 567.67L714.86 573.99L715.98 573.99L715.98 573.99L717.1 573.99L717.1 573.99L718.22 573.99L718.22 573.99L719.35 573.99L719.35 573.99L720.47 573.99L720.47 573.99L721.59 573.99L721.59 573.99L722.71 573.99L722.71 573.99L723.83 573.99L723.83 573.99L724.95 573.99L724.95 573.99L726.07 573.99L726.07 573.99L727.19 573.99L727.19 573.99L728.31 573.99L728.31 573.99L729.43 573.99L729.43 573.99L730.55 573.99L730.55 573.99L731.67 573.99L731.67 573.99L732.79 573.99L732.79 573.99L733.92 573.99L733.92 573.99L735.04 573.99L735.04 573.99L736.16 573.99L736.16 573.99L737.28 573.99L737.28 573.99L738.4 573.99L738.4 573.99L739.52 573.99L739.52 567.67L740.64 567.67L740.64 573.99L741.76 573.99L741.76 573.99L742.88 573.99L742.88 573.99L744 573.99L744 573.99L745.12 573.99L745.12 573.99L746.24 573.99L746.24 573.99L747.36 573.99L747.36 573.99L748.48 573.99L748.48 573.99L749.61 573.99L749.61 573.99L750.73 573.99L750.73 573.99L751.85 573.99L751.85 573.99L752.97 573.99L752.97 567.67L754.09 567.67L754.09 567.67L755.21 567.67L755.21 567.67L756.33 567.67L756.33 567.67L757.45 567.67L757.45 567.67L758.57 567.67L758.57 567.67L759.69 567.67L759.69 567.67L760.81 567.67L760.81 567.67L761.93 567.67L761.93 567.67L763.05 567.67L763.05 567.67L764.17 567.67L764.17 567.67L765.3 567.67L765.3 567.67L766.42 567.67L766.42 567.67L767.54 567.67L767.54 567.67L768.66 567.67L768.66 567.67L769.78 567.67L769.78 567.67L770.9 567.67L770.9 567.67L772.02 567.67L772.02 567.67L773.14 567.67L773.14 567.67L774.26 567.67L774.26 567.67L775.38 567.67L775.38 567.67L776.5 567.67L776.5 567.67L777.62 567.67L777.62 567.67L778.74 567.67L778.74 561.36L779.87 561.36L779.87 561.36L780.99 561.36L780.99 561.36L782.11 561.36L782.11 561.36L783.23 561.36L783.23 561.36L784.35 561.36L784.35 561.36L785.47 561.36L785.47 561.36L786.59 561.36L786.59 561.36L787.71 561.36L787.71 561.36L788.83 561.36L788.83 561.36L789.95 561.36L789.95 561.36L791.07 561.36L791.07 561.36L792.19 561.36L792.19 561.36L793.31 561.36L793.31 561.36L794.43 561.36L794.43 561.36L795.56 561.36L795.56 561.36L796.68 561.36L796.68 561.36L797.8 561.36L797.8 561.36L798.92 561.36L798.92 561.36L800.04 561.36L800.04 561.36L801.16 561.36L801.16 561.36L802.28 561.36L802.28 561.36L803.4 561.36L803.4 561.36L804.52 561.36L804.52 561.36L805.64 561.36L805.64 561.36L806.76 561.36L806.76 561.36L807.88 561.36L807.88 561.36L809 561.36L809 561.36L810.12 561.36L810.12 561.36L811.25 561.36L811.25 561.36L812.37 561.36L812.37 561.36L813.49 561.36L813.49 561.36L814.61 561.36L814.61 561.36L815.73 561.36L815.73 561.36L816.85 561.36L816.85 561.36L817.97 561.36L817.97 561.36L819.09 561.36L819.09 561.36L820.21 561.36L820.21 561.36L821.33 561.36L821.33 561.36L822.45 561.36L822.45 561.36L823.57 561.36L823.57 561.36L824.69 561.36L824.69 561.36L825.81 561.36L825.81 561.36L826.94 561.36L826.94 561.36L828.06 561.36L828.06 561.36L829.18 561.36L829.18 561.36L830.3 561.36L830.3 561.36L831.42 561.36L831.42 561.36L832.54 561.36L832.54 561.36L833.66 561.36L833.66 561.36L834.78 561.36L834.78 561.36L835.9 561.36L835.9 561.36L837.02 561.36L837.02 561.36L838.14 561.36L838.14 561.36L839.26 561.36L839.26 561.36L840.38 561.36L840.38 561.36L841.51 561.36L841.51 561.36L842.63 561.36L842.63 561.36L843.75 561.36L843.75 561.36L844.87 561.36L844.87 561.36L845.99 561.36L845.99 561.36L847.11 561.36L847.11 561.36L848.23 561.36L848.23 561.36L849.35 561.36L849.35 561.36L850.47 561.36L850.47 561.36L851.59 561.36L851.59 561.36L852.71 561.36L852.71 561.36L853.83 561.36L853.83 561.36L854.95 561.36L854.95 561.36L856.07 561.36L856.07 561.36L857.2 561.36L857.2 561.36L858.32 561.36L858.32 561.36L859.44 561.36L859.44 561.36L860.56 561.36L860.56 561.36L861.68 561.36L861.68 561.36L862.8 561.36L862.8 561.36L863.92 561.36L863.92 561.36L865.04 561.36L865.04 561.36L866.16 561.36L866.16 561.36L867.28 561.36L867.28 561.36L868.4 561.36L868.4 561.36L869.52 561.36L869.52 561.36L870.64 561.36L870.64 561.36L871.76 561.36L871.76 561.36L872.89 561.36L872.89 561.36L874.01 561.36L874.01 561.36L875.13 561.36L875.13 561.36L876.25 561.36L876.25 561.36L877.37 561.36L877.37 555.05L878.49 555.05L878.49 561.36L879.61 561.36L879.61 561.36L880.73 561.36L880.73 561.36L881.85 561.36L881.85 561.36L882.97 561.36L882.97 561.36L884.09 561.36L884.09 561.36L885.21 561.36L885.21 561.36L886.33 561.36L886.33 561.36L887.46 561.36L887.46 561.36L888.58 561.36L888.58 561.36L889.7 561.36L889.7 555.05L890.82 555.05L890.82 561.36L891.94 561.36L891.94 561.36L893.06 561.36L893.06 561.36L894.18 561.36L894.18 561.36L895.3 561.36L895.3 561.36L896.42 561.36L896.42 561.36L897.54 561.36L897.54 561.36L898.66 561.36L898.66 561.36L899.78 561.36L899.78 561.36L900.9 561.36L900.9 561.36L902.02 561.36L902.02 561.36L903.15 561.36L903.15 567.67L904.27 567.67L904.27 567.67L905.39 567.67L905.39 567.67L906.51 567.67L906.51 567.67L907.63 567.67L907.63 567.67L908.75 567.67L908.75 567.67L909.87 567.67L909.87 567.67L910.99 567.67L910.99 567.67L912.11 567.67L912.11 567.67L913.23 567.67L913.23 567.67L914.35 567.67L914.35 567.67L915.47 567.67L915.47 561.36L916.59 561.36L916.59 567.67L917.71 567.67L917.71 567.67L918.84 567.67L918.84 567.67L919.96 567.67L919.96 567.67L921.08 567.67L921.08 567.67L922.2 567.67L922.2 567.67L923.32 567.67L923.32 567.67L924.44 567.67L924.44 567.67L925.56 567.67L925.56 567.67L926.68 567.67L926.68 567.67L927.8 567.67L927.8 567.67L928.92 567.67L928.92 567.67L930.04 567.67L930.04 567.67L931.16 567.67L931.16 567.67L932.28 567.67L932.28 567.67L933.4 567.67L933.4 567.67L934.53 567.67L934.53 567.67L935.65 567.67L935.65 567.67L936.77 567.67L936.77 567.67L937.89 567.67L937.89 567.67L939.01 567.67L939.01 567.67L940.13 567.67L940.13 567.67L941.25 567.67L941.25 561.36L942.37 561.36L942.37 567.67L943.49 567.67L943.49 567.67L944.61 567.67L944.61 567.67L945.73 567.67L945.73 567.67L946.85 567.67L946.85 567.67L947.97 567.67L947.97 567.67L949.1 567.67L949.1 567.67L950.22 567.67L950.22 567.67L951.34 567.67L951.34 567.67L952.46 567.67L952.46 567.67L953.58 567.67L953.58 567.67L954.7 567.67L954.7 567.67L955.82 567.67L955.82 567.67L956.94 567.67L956.94 567.67L958.06 567.67L958.06 567.67L959.18 567.67L959.18 567.67L960.3 567.67L960.3 567.67L961.42 567.67L961.42 567.67L962.54 567.67L962.54 567.67L963.66 567.67L963.66 567.67L964.79 567.67L964.79 567.67L965.91 567.67L965.91 567.67L967.03 567.67L967.03 567.67L968.15 567.67L968.15 567.67L969.27 567.67L969.27 567.67L970.39 567.67L970.39 567.67L971.51 567.67L971.51 567.67L972.63 567.67L972.63 567.67L973.75 567.67L973.75 567.67L974.87 567.67L974.87 567.67L975.99 567.67L975.99 567.67L977.11 567.67L977.11 567.67L978.23 567.67L978.23 567.67L979.35 567.67L979.35 567.67L980.48 567.67L980.48 567.67L981.6 567.67L981.6 567.67L982.72 567.67L982.72 567.67L983.84 567.67L983.84 567.67L984.96 567.67L984.96 567.67L986.08 567.67L986.08 567.67L987.2 567.67L987.2 567.67L988.32 567.67L988.32 567.67L989.44 567.67L989.44 567.67L990.56 567.67L990.56 567.67L991.68 567.67L991.68 567.67L992.8 567.67L992.8 567.67L993.92 567.67L993.92 567.67L995.05 567.67L995.05 567.67L996.17 567.67L996.17 567.67L997.29 567.67L997.29 567.67L998.41 567.67L998.41 567.67L999.53 567.67L999.53 567.67L1000.65 567.67L1000.65 567.67L1001.77 567.67L1001.77 567.67L1002.89 567.67L1002.89 567.67L1004.01 567.67L1004.01 567.67L1005.13 567.67L1005.13 567.67L1006.25 567.67L1006.25 567.67L1007.37 567.67L1007.37 567.67L1008.49 567.67L1008.49 567.67L1009.61 567.67L1009.61 567.67L1010.74 567.67L1010.74 567.67L1011.86 567.67L1011.86 567.67L1012.98 567.67L1012.98 567.67L1014.1 567.67L1014.1 567.67L1015.22 567.67L1015.22 567.67L1016.34 567.67L1016.34 567.67L1017.46 567.67L1017.46 567.67L1018.58 567.67L1018.58 567.67L1019.7 567.67L1019.7 567.67L1020.82 567.67L1020.82 567.67L1021.94 567.67L1021.94 567.67L1023.06 567.67L1023.06 567.67L1024.18 567.67L1024.18 567.67L1025.3 567.67L1025.3 567.67L1026.43 567.67L1026.43 567.67L1027.55 567.67L1027.55 567.67L1028.67 567.67L1028.67 561.36L1029.79 561.36L1029.79 567.67L1030.91 567.67L1030.91 567.67L1032.03 567.67L1032.03 567.67L1033.15 567.67L1033.15 567.67L1034.27 567.67L1034.27 567.67L1035.39 567.67L1035.39 567.67L1036.51 567.67L1036.51 567.67L1037.63 567.67L1037.63 567.67L1038.75 567.67L1038.75 567.67L1039.87 567.67L1039.87 567.67L1040.99 567.67L1040.99 567.67L1042.12 567.67L1042.12 567.67L1043.24 567.67L1043.24 567.67L1044.36 567.67L1044.36 567.67L1045.48 567.67L1045.48 567.67L1046.6 567.67L1046.6 567.67L1047.72 567.67L1047.72 567.67L1048.84 567.67L1048.84 567.67L1049.96 567.67L1049.96 567.67L1051.08 567.67L1051.08 567.67L1052.2 567.67L1052.2 567.67L1053.32 567.67L1053.32 567.67L1054.44 567.67L1054.44 567.67L1055.56 567.67L1055.56 567.67L1056.69 567.67L1056.69 567.67L1057.81 567.67L1057.81 567.67L1058.93 567.67L1058.93 567.67L1060.05 567.67L1060.05 567.67L1061.17 567.67L1061.17 567.67L1062.29 567.67L1062.29 567.67L1063.41 567.67L1063.41 567.67L1064.53 567.67L1064.53 567.67L1065.65 567.67L1065.65 567.67L1066.77 567.67L1066.77 567.67L1067.89 567.67L1067.89 567.67L1069.01 567.67L1069.01 567.67L1070.13 567.67L1070.13 567.67L1071.25 567.67L1071.25 561.36L1072.38 561.36L1072.38 567.67L1073.5 567.67L1073.5 567.67L1074.62 567.67L1074.62 561.36L1075.74 561.36L1075.74 561.36L1076.86 561.36L1076.86 561.36L1077.98 561.36L1077.98 561.36L1079.1 561.36L1079.1 561.36L1080.22 561.36L1080.22 561.36L1081.34 561.36L1081.34 561.36L1082.46 561.36L1082.46 561.36L1083.58 561.36L1083.58 561.36L1084.7 561.36L1084.7 561.36L1085.82 561.36L1085.82 561.36L1086.94 561.36L1086.94 561.36L1088.07 561.36L1088.07 561.36L1089.19 561.36L1089.19 561.36L1090.31 561.36L1090.31 555.05L1091.43 555.05L1091.43 555.05L1092.55 555.05L1092.55 561.36L1093.67 561.36L1093.67 555.05L1094.79 555.05L1094.79 555.05L1095.91 555.05L1095.91 555.05L1097.03 555.05L1097.03 555.05L1098.15 555.05L1098.15 555.05L1099.27 555.05L1099.27 555.05L1100.39 555.05L1100.39 555.05L1101.51 555.05L1101.51 561.36L1102.64 561.36L1102.64 555.05L1103.76 555.05L1103.76 555.05L1104.88 555.05L1104.88 555.05L1106 555.05L1106 555.05L1107.12 555.05L1107.12 555.05L1108.24 555.05L1108.24 561.36L1109.36 561.36L1109.36 555.05L1110.48 555.05L1110.48 555.05L1111.6 555.05L1111.6 561.36L1112.72 561.36L1112.72 555.05L1113.84 555.05L1113.84 561.36L1114.96 561.36L1114.96 555.05L1116.08 555.05L1116.08 555.05L1117.2 555.05L1117.2 555.05L1118.33 555.05L1118.33 561.36L1119.45 561.36L1119.45 555.05L1120.57 555.05L1120.57 561.36L1121.69 561.36L1121.69 561.36L1122.81 561.36L1122.81 555.05L1123.93 555.05L1123.93 555.05L1125.05 555.05L1125.05 555.05L1126.17 555.05L1126.17 555.05L1127.29 555.05L1127.29 561.36L1128.41 561.36L1128.41 561.36L1129.53 561.36L1129.53 555.05L1130.65 555.05L1130.65 561.36L1131.77 561.36L1131.77 555.05L1132.89 555.05L1132.89 555.05L1134.02 555.05L1134.02 555.05L1135.14 555.05L1135.14 555.05L1136.26 555.05L1136.26 555.05L1137.38 555.05L1137.38 555.05L1138.5 555.05L1138.5 555.05L1139.62 555.05L1139.62 561.36L1140.74 561.36L1140.74 561.36L1141.86 561.36L1141.86 555.05L1142.98 555.05L1142.98 555.05L1144.1 555.05L1144.1 555.05L1145.22 555.05L1145.22 555.05L1146.34 555.05L1146.34 555.05L1147.46 555.05L1147.46 555.05L1148.58 555.05L1148.58 555.05L1149.71 555.05L1149.71 555.05L1150.83 555.05L1150.83 555.05L1151.95 555.05L1151.95 561.36L1153.07 561.36L1153.07 561.36L1154.19 561.36L1154.19 561.36L1155.31 561.36L1155.31 561.36L1156.43 561.36L1156.43 561.36L1157.55 561.36L1157.55 555.05L1158.67 555.05L1158.67 555.05L1159.79 555.05L1159.79 561.36L1160.91 561.36L1160.91 561.36L1162.03 561.36L1162.03 555.05L1163.15 555.05L1163.15 555.05L1164.28 555.05L1164.28 555.05L1165.4 555.05L1165.4 555.05L1166.52 555.05L1166.52 561.36L1167.64 561.36L1167.64 561.36L1168.76 561.36L1168.76 561.36L1169.88 561.36L1169.88 561.36L1171 561.36L1171 561.36L1172.12 561.36L1172.12 561.36L1173.24 561.36L1173.24 555.05L1174.36 555.05L1174.36 561.36L1175.48 561.36L1175.48 555.05L1176.6 555.05L1176.6 555.05L1177.72 555.05L1177.72 555.05L1178.84 555.05L1178.84 561.36L1179.97 561.36L1179.97 555.05L1181.09 555.05L1181.09 555.05L1182.21 555.05L1182.21 555.05L1183.33 555.05L1183.33 555.05L1184.45 555.05L1184.45 555.05L1185.57 555.05L1185.57 555.05L1186.69 555.05L1186.69 561.36L1187.81 561.36L1187.81 561.36L1188.93 561.36L1188.93 555.05L1190.05 555.05L1190.05 555.05L1191.17 555.05L1191.17 555.05L1192.29 555.05L1192.29 555.05L1193.41 555.05L1193.41 561.36L1194.53 561.36L1194.53 555.05L1195.66 555.05L1195.66 561.36L1196.78 561.36L1196.78 561.36L1197.9 561.36L1197.9 422.49L1199.02 422.49L1199.02 390.92L1200.14 390.92L1200.14 371.99L1201.26 371.99L1201.26 371.99L1202.38 371.99L1202.38 384.61L1203.5 384.61L1203.5 390.92L1204.62 390.92L1204.62 390.92L1205.74 390.92L1205.74 580.3ZM1353.68 580.3L1353.68 555.05L1354.8 555.05L1354.8 555.05L1355.92 555.05L1355.92 555.05L1357.04 555.05L1357.04 555.05L1358.16 555.05L1358.16 573.99L1359.28 573.99L1359.28 573.99L1360.4 573.99L1360.4 567.67L1361.52 567.67L1361.52 573.99L1362.64 573.99L1362.64 573.99L1363.76 573.99L1363.76 573.99L1364.89 573.99L1364.89 573.99L1366.01 573.99L1366.01 573.99L1367.13 573.99L1367.13 567.67L1368.25 567.67L1368.25 573.99L1369.37 573.99L1369.37 573.99L1370.49 573.99L1370.49 573.99L1371.61 573.99L1371.61 573.99L1372.73 573.99L1372.73 573.99L1373.85 573.99L1373.85 573.99L1374.97 573.99L1374.97 573.99L1376.09 573.99L1376.09 573.99L1377.21 573.99L1377.21 573.99L1378.33 573.99L1378.33 573.99L1379.46 573.99L1379.46 573.99L1380.58 573.99L1380.58 573.99L1381.7 573.99L1381.7 573.99L1382.82 573.99L1382.82 573.99L1383.94 573.99L1383.94 573.99L1385.06 573.99L1385.06 573.99L1386.18 573.99L1386.18 567.67L1387.3 567.67L1387.3 573.99L1388.42 573.99L1388.42 573.99L1389.54 573.99L1389.54 573.99L1390.66 573.99L1390.66 573.99L1391.78 573.99L1391.78 573.99L1392.9 573.99L1392.9 573.99L1394.02 573.99L1394.02 573.99L1395.15 573.99L1395.15 573.99L1396.27 573.99L1396.27 567.67L1397.39 567.67L1397.39 567.67L1398.51 567.67L1398.51 567.67L1399.63 567.67L1399.63 567.67L1400.75 567.67L1400.75 567.67L1401.87 567.67L1401.87 567.67L1402.99 567.67L1402.99 567.67L1404.11 567.67L1404.11 561.36L1405.23 561.36L1405.23 561.36L1406.35 561.36L1406.35 555.05L1407.47 555.05L1407.47 561.36L1408.59 561.36L1408.59 561.36L1409.71 561.36L1409.71 561.36L1410.84 561.36L1410.84 561.36L1411.96 561.36L1411.96 561.36L1413.08 561.36L1413.08 555.05L1414.2 555.05L1414.2 561.36L1415.32 561.36L1415.32 561.36L1416.44 561.36L1416.44 561.36L1417.56 561.36L1417.56 561.36L1418.68 561.36L1418.68 561.36L1419.8 561.36L1419.8 561.36L1420.92 561.36L1420.92 561.36L1422.04 561.36L1422.04 561.36L1423.16 561.36L1423.16 561.36L1424.28 561.36L1424.28 561.36L1425.41 561.36L1425.41 555.05L1426.53 555.05L1426.53 561.36L1427.65 561.36L1427.65 561.36L1428.77 561.36L1428.77 561.36L1429.89 561.36L1429.89 561.36L1431.01 561.36L1431.01 561.36L1432.13 561.36L1432.13 561.36L1433.25 561.36L1433.25 561.36L1434.37 561.36L1434.37 561.36L1435.49 561.36L1435.49 561.36L1436.61 561.36L1436.61 561.36L1437.73 561.36L1437.73 561.36L1438.85 561.36L1438.85 561.36L1439.97 561.36L1439.97 561.36L1441.1 561.36L1441.1 561.36L1442.22 561.36L1442.22 561.36L1443.34 561.36L1443.34 561.36L1444.46 561.36L1444.46 561.36L1445.58 561.36L1445.58 561.36L1446.7 561.36L1446.7 561.36L1447.82 561.36L1447.82 561.36L1448.94 561.36L1448.94 561.36L1450.06 561.36L1450.06 561.36L1451.18 561.36L1451.18 561.36L1452.3 561.36L1452.3 561.36L1453.42 561.36L1453.42 561.36L1454.54 561.36L1454.54 561.36L1455.66 561.36L1455.66 561.36L1456.79 561.36L1456.79 561.36L1457.91 561.36L1457.91 561.36L1459.03 561.36L1459.03 561.36L1460.15 561.36L1460.15 561.36L1461.27 561.36L1461.27 561.36L1462.39 561.36L1462.39 561.36L1463.51 561.36L1463.51 561.36L1464.63 561.36L1464.63 561.36L1465.75 561.36L1465.75 561.36L1466.87 561.36L1466.87 561.36L1467.99 561.36L1467.99 561.36L1469.11 561.36L1469.11 561.36L1470.23 561.36L1470.23 561.36L1471.35 561.36L1471.35 561.36L1472.48 561.36L1472.48 561.36L1473.6 561.36L1473.6 561.36L1474.72 561.36L1474.72 561.36L1475.84 561.36L1475.84 561.36L1476.96 561.36L1476.96 561.36L1478.08 561.36L1478.08 561.36L1479.2 561.36L1479.2 561.36L1480.32 561.36L1480.32 561.36L1481.44 561.36L1481.44 561.36L1482.56 561.36L1482.56 561.36L1483.68 561.36L1483.68 561.36L1484.8 561.36L1484.8 561.36L1485.92 561.36L1485.92 561.36L1487.05 561.36L1487.05 561.36L1488.17 561.36L1488.17 561.36L1489.29 561.36L1489.29 561.36L1490.41 561.36L1490.41 561.36L1491.53 561.36L1491.53 555.05L1492.65 555.05L1492.65 561.36L1493.77 561.36L1493.77 555.05L1494.89 555.05L1494.89 561.36L1496.01 561.36L1496.01 561.36L1497.13 561.36L1497.13 561.36L1498.25 561.36L1498.25 561.36L1499.37 561.36L1499.37 561.36L1500.49 561.36L1500.49 561.36L1501.61 561.36L1501.61 561.36L1502.74 561.36L1502.74 561.36L1503.86 561.36L1503.86 561.36L1504.98 561.36L1504.98 561.36L1506.1 561.36L1506.1 561.36L1507.22 561.36L1507.22 555.05L1508.34 555.05L1508.34 561.36L1509.46 561.36L1509.46 555.05L1510.58 555.05L1510.58 555.05L1511.7 555.05L1511.7 555.05L1512.82 555.05L1512.82 561.36L1513.94 561.36L1513.94 555.05L1515.06 555.05L1515.06 561.36L1516.18 561.36L1516.18 561.36L1517.3 561.36L1517.3 555.05L1518.43 555.05L1518.43 555.05L1519.55 555.05L1519.55 561.36L1520.67 561.36L1520.67 561.36L1521.79 561.36L1521.79 561.36L1522.91 561.36L1522.91 555.05L1524.03 555.05L1524.03 555.05L1525.15 555.05L1525.15 555.05L1526.27 555.05L1526.27 561.36L1527.39 561.36L1527.39 555.05L1528.51 555.05L1528.51 580.3ZM1676.45 580.3L1676.45 573.99L1677.57 573.99L1677.57 573.99L1678.69 573.99L1678.69 573.99L1679.81 573.99L1679.81 573.99L1680.93 573.99L1680.93 573.99L1682.05 573.99L1682.05 573.99L1683.17 573.99L1683.17 573.99L1684.29 573.99L1684.29 567.67L1685.41 567.67L1685.41 573.99L1686.53 573.99L1686.53 573.99L1687.66 573.99L1687.66 567.67L1688.78 567.67L1688.78 573.99L1689.9 573.99L1689.9 573.99L1691.02 573.99L1691.02 573.99L1692.14 573.99L1692.14 573.99L1693.26 573.99L1693.26 573.99L1694.38 573.99L1694.38 573.99L1695.5 573.99L1695.5 573.99L1696.62 573.99L1696.62 573.99L1697.74 573.99L1697.74 567.67L1698.86 567.67L1698.86 573.99L1699.98 573.99L1699.98 573.99L1701.1 573.99L1701.1 573.99L1702.23 573.99L1702.23 573.99L1703.35 573.99L1703.35 573.99L1704.47 573.99L1704.47 573.99L1705.59 573.99L1705.59 573.99L1706.71 573.99L1706.71 573.99L1707.83 573.99L1707.83 573.99L1708.95 573.99L1708.95 573.99L1710.07 573.99L1710.07 573.99L1711.19 573.99L1711.19 573.99L1712.31 573.99L1712.31 573.99L1713.43 573.99L1713.43 573.99L1714.55 573.99L1714.55 573.99L1715.67 573.99L1715.67 573.99L1716.79 573.99L1716.79 567.67L1717.92 567.67L1717.92 567.67L1719.04 567.67L1719.04 567.67L1720.16 567.67L1720.16 567.67L1721.28 567.67L1721.28 567.67L1722.4 567.67L1722.4 567.67L1723.52 567.67L1723.52 567.67L1724.64 567.67L1724.64 567.67L1725.76 567.67L1725.76 567.67L1726.88 567.67L1726.88 567.67L1728 567.67L1728 567.67L1729.12 567.67L1729.12 567.67L1730.24 567.67L1730.24 567.67L1731.36 567.67L1731.36 567.67L1732.48 567.67L1732.48 567.67L1733.61 567.67L1733.61 567.67L1734.73 567.67L1734.73 567.67L1735.85 567.67L1735.85 567.67L1736.97 567.67L1736.97 567.67L1738.09 567.67L1738.09 567.67L1739.21 567.67L1739.21 567.67L1740.33 567.67L1740.33 567.67L1741.45 567.67L1741.45 567.67L1742.57 567.67L1742.57 567.67L1743.69 567.67L1743.69 567.67L1744.81 567.67L1744.81 567.67L1745.93 567.67L1745.93 567.67L1747.05 567.67L1747.05 567.67L1748.18 567.67L1748.18 567.67L1749.3 567.67L1749.3 567.67L1750.42 567.67L1750.42 567.67L1751.54 567.67L1751.54 567.67L1752.66 567.67L1752.66 567.67L1753.78 567.67L1753.78 567.67L1754.9 567.67L1754.9 567.67L1756.02 567.67L1756.02 567.67L1757.14 567.67L1757.14 567.67L1758.26 567.67L1758.26 561.36L1759.38 561.36L1759.38 567.67L1760.5 567.67L1760.5 567.67L1761.62 567.67L1761.62 567.67L1762.74 567.67L1762.74 567.67L1763.87 567.67L1763.87 567.67L1764.99 567.67L1764.99 567.67L1766.11 567.67L1766.11 567.67L1767.23 567.67L1767.23 567.67L1768.35 567.67L1768.35 567.67L1769.47 567.67L1769.47 567.67L1770.59 567.67L1770.59 567.67L1771.71 567.67L1771.71 567.67L1772.83 567.67L1772.83 567.67L1773.95 567.67L1773.95 567.67L1775.07 567.67L1775.07 567.67L1776.19 567.67L1776.19 567.67L1777.31 567.67L1777.31 567.67L1778.43 567.67L1778.43 567.67L1779.56 567.67L1779.56 567.67L1780.68 567.67L1780.68 567.67L1781.8 567.67L1781.8 567.67L1782.92 567.67L1782.92 567.67L1784.04 567.67L1784.04 567.67L1785.16 567.67L1785.16 567.67L1786.28 567.67L1786.28 567.67L1787.4 567.67L1787.4 567.67L1788.52 567.67L1788.52 567.67L1789.64 567.67L1789.64 567.67L1790.76 567.67L1790.76 567.67L1791.88 567.67L1791.88 567.67L1793 567.67L1793 567.67L1794.12 567.67L1794.12 567.67L1795.25 567.67L1795.25 567.67L1796.37 567.67L1796.37 567.67L1797.49 567.67L1797.49 567.67L1798.61 567.67L1798.61 567.67L1799.73 567.67L1799.73 567.67L1800.85 567.67L1800.85 567.67L1801.97 567.67L1801.97 567.67L1803.09 567.67L1803.09 567.67L1804.21 567.67L1804.21 567.67L1805.33 567.67L1805.33 567.67L1806.45 567.67L1806.45 567.67L1807.57 567.67L1807.57 567.67L1808.69 567.67L1808.69 567.67L1809.82 567.67L1809.82 567.67L1810.94 567.67L1810.94 567.67L1812.06 567.67L1812.06 567.67L1813.18 567.67L1813.18 567.67L1814.3 567.67L1814.3 567.67L1815.42 567.67L1815.42 567.67L1816.54 567.67L1816.54 567.67L1817.66 567.67L1817.66 567.67L1818.78 567.67L1818.78 567.67L1819.9 567.67L1819.9 567.67L1821.02 567.67L1821.02 567.67L1822.14 567.67L1822.14 567.67L1823.26 567.67L1823.26 567.67L1824.38 567.67L1824.38 567.67L1825.51 567.67L1825.51 567.67L1826.63 567.67L1826.63 567.67L1827.75 567.67L1827.75 567.67L1828.87 567.67L1828.87 567.67L1829.99 567.67L1829.99 567.67L1831.11 567.67L1831.11 567.67L1832.23 567.67L1832.23 567.67L1833.35 567.67L1833.35 567.67L1834.47 567.67L1834.47 567.67L1835.59 567.67L1835.59 567.67L1836.71 567.67L1836.71 567.67L1837.83 567.67L1837.83 567.67L1838.95 567.67L1838.95 567.67L1840.07 567.67L1840.07 567.67L1841.2 567.67L1841.2 567.67L1842.32 567.67L1842.32 567.67L1843.44 567.67L1843.44 567.67L1844.56 567.67L1844.56 567.67L1845.68 567.67L1845.68 567.67L1846.8 567.67L1846.8 567.67L1847.92 567.67L1847.92 567.67L1849.04 567.67L1849.04 567.67L1850.16 567.67L1850.16 567.67L1851.28 567.67L1851.28 580.3ZM1999.22 580.3L1999.22 573.99L2000.34 573.99L2000.34 573.99L2001.46 573.99L2001.46 573.99L2002.58 573.99L2002.58 573.99L2003.7 573.99L2003.7 573.99L2004.82 573.99L2004.82 573.99L2005.94 573.99L2005.94 573.99L2007.06 573.99L2007.06 573.99L2008.18 573.99L2008.18 573.99L2009.3 573.99L2009.3 573.99L2010.43 573.99L2010.43 573.99L2011.55 573.99L2011.55 573.99L2012.67 573.99L2012.67 573.99L2013.79 573.99L2013.79 573.99L2014.91 573.99L2014.91 573.99L2016.03 573.99L2016.03 573.99L2017.15 573.99L2017.15 573.99L2018.27 573.99L2018.27 573.99L2019.39 573.99L2019.39 573.99L2020.51 573.99L2020.51 573.99L2021.63 573.99L2021.63 573.99L2022.75 573.99L2022.75 573.99L2023.87 573.99L2023.87 573.99L2025 573.99L2025 573.99L2026.12 573.99L2026.12 573.99L2027.24 573.99L2027.24 573.99L2028.36 573.99L2028.36 573.99L2029.48 573.99L2029.48 573.99L2030.6 573.99L2030.6 573.99L2031.72 573.99L2031.72 573.99L2032.84 573.99L2032.84 573.99L2033.96 573.99L2033.96 573.99L2035.08 573.99L2035.08 573.99L2036.2 573.99L2036.2 573.99L2037.32 573.99L2037.32 573.99L2038.44 573.99L2038.44 573.99L2039.56 573.99L2039.56 573.99L2040.69 573.99L2040.69 573.99L2041.81 573.99L2041.81 573.99L2042.93 573.99L2042.93 573.99L2044.05 573.99L2044.05 573.99L2045.17 573.99L2045.17 567.67L2046.29 567.67L2046.29 567.67L2047.41 567.67L2047.41 567.67L2048.53 567.67L2048.53 567.67L2049.65 567.67L2049.65 567.67L2050.77 567.67L2050.77 567.67L2051.89 567.67L2051.89 567.67L2053.01 567.67L2053.01 567.67L2054.13 567.67L2054.13 567.67L2055.25 567.67L2055.25 567.67L2056.38 567.67L2056.38 567.67L2057.5 567.67L2057.5 567.67L2058.62 567.67L2058.62 567.67L2059.74 567.67L2059.74 567.67L2060.86 567.67L2060.86 567.67L2061.98 567.67L2061.98 567.67L2063.1 567.67L2063.1 567.67L2064.22 567.67L2064.22 567.67L2065.34 567.67L2065.34 567.67L2066.46 567.67L2066.46 567.67L2067.58 567.67L2067.58 567.67L2068.7 567.67L2068.7 567.67L2069.82 567.67L2069.82 567.67L2070.95 567.67L2070.95 567.67L2072.07 567.67L2072.07 567.67L2073.19 567.67L2073.19 567.67L2074.31 567.67L2074.31 567.67L2075.43 567.67L2075.43 567.67L2076.55 567.67L2076.55 567.67L2077.67 567.67L2077.67 567.67L2078.79 567.67L2078.79 567.67L2079.91 567.67L2079.91 567.67L2081.03 567.67L2081.03 567.67L2082.15 567.67L2082.15 567.67L2083.27 567.67L2083.27 567.67L2084.39 567.67L2084.39 567.67L2085.51 567.67L2085.51 567.67L2086.64 567.67L2086.64 567.67L2087.76 567.67L2087.76 567.67L2088.88 567.67L2088.88 567.67L2090 567.67L2090 567.67L2091.12 567.67L2091.12 567.67L2092.24 567.67L2092.24 567.67L2093.36 567.67L2093.36 567.67L2094.48 567.67L2094.48 573.99L2095.6 573.99L2095.6 567.67L2096.72 567.67L2096.72 573.99L2097.84 573.99L2097.84 567.67L2098.96 567.67L2098.96 567.67L2100.08 567.67L2100.08 573.99L2101.2 573.99L2101.2 567.67L2102.33 567.67L2102.33 573.99L2103.45 573.99L2103.45 567.67L2104.57 567.67L2104.57 567.67L2105.69 567.67L2105.69 567.67L2106.81 567.67L2106.81 573.99L2107.93 573.99L2107.93 567.67L2109.05 567.67L2109.05 573.99L2110.17 573.99L2110.17 567.67L2111.29 567.67L2111.29 573.99L2112.41 573.99L2112.41 567.67L2113.53 567.67L2113.53 567.67L2114.65 567.67L2114.65 573.99L2115.77 573.99L2115.77 567.67L2116.89 567.67L2116.89 567.67L2118.02 567.67L2118.02 573.99L2119.14 573.99L2119.14 567.67L2120.26 567.67L2120.26 567.67L2121.38 567.67L2121.38 573.99L2122.5 573.99L2122.5 567.67L2123.62 567.67L2123.62 573.99L2124.74 573.99L2124.74 567.67L2125.86 567.67L2125.86 567.67L2126.98 567.67L2126.98 573.99L2128.1 573.99L2128.1 567.67L2129.22 567.67L2129.22 567.67L2130.34 567.67L2130.34 573.99L2131.46 573.99L2131.46 567.67L2132.59 567.67L2132.59 567.67L2133.71 567.67L2133.71 573.99L2134.83 573.99L2134.83 567.67L2135.95 567.67L2135.95 573.99L2137.07 573.99L2137.07 567.67L2138.19 567.67L2138.19 567.67L2139.31 567.67L2139.31 573.99L2140.43 573.99L2140.43 567.67L2141.55 567.67L2141.55 567.67L2142.67 567.67L2142.67 573.99L2143.79 573.99L2143.79 567.67L2144.91 567.67L2144.91 567.67L2146.03 567.67L2146.03 573.99L2147.15 573.99L2147.15 567.67L2148.28 567.67L2148.28 567.67L2149.4 567.67L2149.4 573.99L2150.52 573.99L2150.52 567.67L2151.64 567.67L2151.64 567.67L2152.76 567.67L2152.76 567.67L2153.88 567.67L2153.88 567.67L2155 567.67L2155 573.99L2156.12 573.99L2156.12 567.67L2157.24 567.67L2157.24 567.67L2158.36 567.67L2158.36 573.99L2159.48 573.99L2159.48 567.67L2160.6 567.67L2160.6 567.67L2161.72 567.67L2161.72 573.99L2162.84 573.99L2162.84 567.67L2163.97 567.67L2163.97 567.67L2165.09 567.67L2165.09 567.67L2166.21 567.67L2166.21 567.67L2167.33 567.67L2167.33 573.99L2168.45 573.99L2168.45 567.67L2169.57 567.67L2169.57 567.67L2170.69 567.67L2170.69 573.99L2171.81 573.99L2171.81 567.67L2172.93 567.67L2172.93 567.67L2174.05 567.67L2174.05 580.3ZM2321.99 580.3L2321.99 573.99L2323.11 573.99L2323.11 573.99L2324.23 573.99L2324.23 573.99L2325.35 573.99L2325.35 573.99L2326.47 573.99L2326.47 573.99L2327.59 573.99L2327.59 573.99L2328.71 573.99L2328.71 573.99L2329.83 573.99L2329.83 573.99L2330.95 573.99L2330.95 573.99L2332.07 573.99L2332.07 573.99L2333.2 573.99L2333.2 573.99L2334.32 573.99L2334.32 573.99L2335.44 573.99L2335.44 573.99L2336.56 573.99L2336.56 573.99L2337.68 573.99L2337.68 573.99L2338.8 573.99L2338.8 573.99L2339.92 573.99L2339.92 573.99L2341.04 573.99L2341.04 573.99L2342.16 573.99L2342.16 573.99L2343.28 573.99L2343.28 573.99L2344.4 573.99L2344.4 573.99L2345.52 573.99L2345.52 573.99L2346.64 573.99L2346.64 573.99L2347.77 573.99L2347.77 573.99L2348.89 573.99L2348.89 573.99L2350.01 573.99L2350.01 573.99L2351.13 573.99L2351.13 573.99L2352.25 573.99L2352.25 573.99L2353.37 573.99L2353.37 573.99L2354.49 573.99L2354.49 573.99L2355.61 573.99L2355.61 573.99L2356.73 573.99L2356.73 573.99L2357.85 573.99L2357.85 573.99L2358.97 573.99L2358.97 573.99L2360.09 573.99L2360.09 580.3ZM2361.21 580.3L2361.21 573.99L2362.33 573.99L2362.33 573.99L2363.46 573.99L2363.46 573.99L2364.58 573.99L2364.58 573.99L2365.7 573.99L2365.7 573.99L2366.82 573.99L2366.82 573.99L2367.94 573.99L2367.94 573.99L2369.06 573.99L2369.06 567.67L2370.18 567.67L2370.18 573.99L2371.3 573.99L2371.3 567.67L2372.42 567.67L2372.42 573.99L2373.54 573.99L2373.54 567.67L2374.66 567.67L2374.66 573.99L2375.78 573.99L2375.78 567.67L2376.9 567.67L2376.9 573.99L2378.02 573.99L2378.02 567.67L2379.15 567.67L2379.15 573.99L2380.27 573.99L2380.27 567.67L2381.39 567.67L2381.39 573.99L2382.51 573.99L2382.51 573.99L2383.63 573.99L2383.63 567.67L2384.75 567.67L2384.75 567.67L2385.87 567.67L2385.87 573.99L2386.99 573.99L2386.99 567.67L2388.11 567.67L2388.11 573.99L2389.23 573.99L2389.23 567.67L2390.35 567.67L2390.35 567.67L2391.47 567.67L2391.47 573.99L2392.59 573.99L2392.59 567.67L2393.72 567.67L2393.72 573.99L2394.84 573.99L2394.84 567.67L2395.96 567.67L2395.96 573.99L2397.08 573.99L2397.08 567.67L2398.2 567.67L2398.2 573.99L2399.32 573.99L2399.32 567.67L2400.44 567.67L2400.44 567.67L2401.56 567.67L2401.56 573.99L2402.68 573.99L2402.68 567.67L2403.8 567.67L2403.8 573.99L2404.92 573.99L2404.92 567.67L2406.04 567.67L2406.04 567.67L2407.16 567.67L2407.16 567.67L2408.28 567.67L2408.28 573.99L2409.41 573.99L2409.41 567.67L2410.53 567.67L2410.53 573.99L2411.65 573.99L2411.65 567.67L2412.77 567.67L2412.77 567.67L2413.89 567.67L2413.89 573.99L2415.01 573.99L2415.01 580.3Z" fill="#a0ecc2"/><path d="M237.43 580.3L237.43 416.82L238.55 416.82L238.55 402.05L239.67 402.05L239.67 439.6L240.79 439.6L240.79 414.43L241.92 414.43L241.92 379.48L243.04 379.48L243.04 300.28L244.16 300.28L244.16 365.09L245.28 365.09L245.28 311.06L246.4 311.06L246.4 278.2L247.52 278.2L247.52 257.76L248.64 257.76L248.64 331.91L249.76 331.91L249.76 100.55L250.88 100.55L250.88 182.61L252 182.61L252 353.19L253.12 353.19L253.12 367.2L254.24 367.2L254.24 370.37L255.36 370.37L255.36 383.66L256.48 383.66L256.48 365.84L257.61 365.84L257.61 403.06L258.73 403.06L258.73 270.99L259.85 270.99L259.85 385.49L260.97 385.49L260.97 407.96L262.09 407.96L262.09 371.99L263.21 371.99L263.21 371.99L264.33 371.99L264.33 405.69L265.45 405.69L265.45 384.15L266.57 384.15L266.57 387.6L267.69 387.6L267.69 387.35L268.81 387.35L268.81 303.49L269.93 303.49L269.93 201.55L271.05 201.55L271.05 325.73L272.17 325.73L272.17 256.56L273.3 256.56L273.3 113.17L274.42 113.17L274.42 437.83L275.54 437.83L275.54 442.63L276.66 442.63L276.66 450L277.78 450L277.78 409.45L278.9 409.45L278.9 351.93L280.02 351.93L280.02 366.29L281.14 366.29L281.14 370.63L282.26 370.63L282.26 265.5L283.38 265.5L283.38 265.09L284.5 265.09L284.5 364.59L285.62 364.59L285.62 321.86L286.74 321.86L286.74 125.8L287.86 125.8L287.86 369.23L288.99 369.23L288.99 358.31L290.11 358.31L290.11 252.05L291.23 252.05L291.23 318.51L292.35 318.51L292.35 252.05L293.47 252.05L293.47 157.36L294.59 157.36L294.59 308.57L295.71 308.57L295.71 331.8L296.83 331.8L296.83 342.9L297.95 342.9L297.95 361.39L299.07 361.39L299.07 375.63L300.19 375.63L300.19 405.05L301.31 405.05L301.31 369.08L302.43 369.08L302.43 346.71L303.56 346.71L303.56 345.14L304.68 345.14L304.68 303.54L305.8 303.54L305.8 369.5L306.92 369.5L306.92 263.62L308.04 263.62L308.04 245.74L309.16 245.74L309.16 371.92L310.28 371.92L310.28 364.14L311.4 364.14L311.4 326.05L312.52 326.05L312.52 327.16L313.64 327.16L313.64 292.54L314.76 292.54L314.76 195.24L315.88 195.24L315.88 265.19L317 265.19L317 324.72L318.12 324.72L318.12 386.65L319.25 386.65L319.25 374.12L320.37 374.12L320.37 366.27L321.49 366.27L321.49 370.2L322.61 370.2L322.61 382.66L323.73 382.66L323.73 402.29L324.85 402.29L324.85 423.47L325.97 423.47L325.97 422.49L327.09 422.49L327.09 452.81L328.21 452.81L328.21 449.73L329.33 449.73L329.33 442.32L330.45 442.32L330.45 405.27L331.57 405.27L331.57 432.43L332.69 432.43L332.69 375.23L333.81 375.23L333.81 195.24L334.94 195.24L334.94 283.21L336.06 283.21L336.06 269.19L337.18 269.19L337.18 354.74L338.3 354.74L338.3 312.17L339.42 312.17L339.42 268.16L340.54 268.16L340.54 207.86L341.66 207.86L341.66 368.4L342.78 368.4L342.78 374.38L343.9 374.38L343.9 377.21L345.02 377.21L345.02 383.1L346.14 383.1L346.14 423.18L347.26 423.18L347.26 396.19L348.38 396.19L348.38 404.04L349.51 404.04L349.51 411.89L350.63 411.89L350.63 400.56L351.75 400.56L351.75 380.1L352.87 380.1L352.87 331.87L353.99 331.87L353.99 245.74L355.11 245.74L355.11 321.36L356.23 321.36L356.23 316.72L357.35 316.72L357.35 368.92L358.47 368.92L358.47 378.9L359.59 378.9L359.59 375.87L360.71 375.87L360.71 391.17L361.83 391.17L361.83 364.09L362.95 364.09L362.95 396.81L364.07 396.81L364.07 375.88L365.2 375.88L365.2 365.01L366.32 365.01L366.32 220.49L367.44 220.49L367.44 256.13L368.56 256.13L368.56 296.73L369.68 296.73L369.68 346.33L370.8 346.33L370.8 302.55L371.92 302.55L371.92 362.41L373.04 362.41L373.04 382.04L374.16 382.04L374.16 430.35L375.28 430.35L375.28 397L376.4 397L376.4 436.39L377.52 436.39L377.52 400.96L378.64 400.96L378.64 402.14L379.76 402.14L379.76 385.26L380.89 385.26L380.89 378.75L382.01 378.75L382.01 396.31L383.13 396.31L383.13 386.6L384.25 386.6L384.25 412.4L385.37 412.4L385.37 580.3ZM1205.74 580.3L1205.74 432.36L1206.86 432.36L1206.86 428.54L1207.98 428.54L1207.98 400.18L1209.1 400.18L1209.1 409.6L1210.23 409.6L1210.23 386.65L1211.35 386.65L1211.35 385.15L1212.47 385.15L1212.47 386.86L1213.59 386.86L1213.59 388.57L1214.71 388.57L1214.71 416.66L1215.83 416.66L1215.83 366.11L1216.95 366.11L1216.95 336.87L1218.07 336.87L1218.07 359.1L1219.19 359.1L1219.19 338.03L1220.31 338.03L1220.31 331.07L1221.43 331.07L1221.43 353.25L1222.55 353.25L1222.55 331.86L1223.67 331.86L1223.67 321.71L1224.79 321.71L1224.79 314.68L1225.92 314.68L1225.92 239.42L1227.04 239.42L1227.04 182.61L1228.16 182.61L1228.16 356.61L1229.28 356.61L1229.28 339.76L1230.4 339.76L1230.4 378.75L1231.52 378.75L1231.52 407.97L1232.64 407.97L1232.64 411.23L1233.76 411.23L1233.76 406.87L1234.88 406.87L1234.88 382.03L1236 382.03L1236 374.77L1237.12 374.77L1237.12 310.89L1238.24 310.89L1238.24 220.49L1239.36 220.49L1239.36 356.35L1240.48 356.35L1240.48 355.55L1241.61 355.55L1241.61 264.67L1242.73 264.67L1242.73 350.79L1243.85 350.79L1243.85 335.57L1244.97 335.57L1244.97 297.45L1246.09 297.45L1246.09 337.77L1247.21 337.77L1247.21 301.9L1248.33 301.9L1248.33 245.74L1249.45 245.74L1249.45 342.54L1250.57 342.54L1250.57 314.61L1251.69 314.61L1251.69 309.35L1252.81 309.35L1252.81 325.79L1253.93 325.79L1253.93 312.27L1255.05 312.27L1255.05 290.47L1256.17 290.47L1256.17 298.5L1257.3 298.5L1257.3 312.85L1258.42 312.85L1258.42 283.61L1259.54 283.61L1259.54 263.67L1260.66 263.67L1260.66 176.3L1261.78 176.3L1261.78 220.49L1262.9 220.49L1262.9 370.29L1264.02 370.29L1264.02 341.4L1265.14 341.4L1265.14 342.7L1266.26 342.7L1266.26 364.1L1267.38 364.1L1267.38 385.14L1268.5 385.14L1268.5 367.3L1269.62 367.3L1269.62 314.22L1270.74 314.22L1270.74 293.79L1271.87 293.79L1271.87 349.9L1272.99 349.9L1272.99 201.55L1274.11 201.55L1274.11 264.67L1275.23 264.67L1275.23 386.11L1276.35 386.11L1276.35 355.86L1277.47 355.86L1277.47 384.48L1278.59 384.48L1278.59 383.5L1279.71 383.5L1279.71 366.52L1280.83 366.52L1280.83 390.01L1281.95 390.01L1281.95 426.19L1283.07 426.19L1283.07 411.44L1284.19 411.44L1284.19 402.41L1285.31 402.41L1285.31 417.7L1286.43 417.7L1286.43 397.24L1287.56 397.24L1287.56 392.16L1288.68 392.16L1288.68 346.74L1289.8 346.74L1289.8 392.84L1290.92 392.84L1290.92 380.76L1292.04 380.76L1292.04 397.24L1293.16 397.24L1293.16 398.33L1294.28 398.33L1294.28 397.24L1295.4 397.24L1295.4 277.3L1296.52 277.3L1296.52 394.1L1297.64 394.1L1297.64 289.92L1298.76 289.92L1298.76 385.63L1299.88 385.63L1299.88 395.25L1301 395.25L1301 385.04L1302.12 385.04L1302.12 417.78L1303.25 417.78L1303.25 401.28L1304.37 401.28L1304.37 402.88L1305.49 402.88L1305.49 381.58L1306.61 381.58L1306.61 409.94L1307.73 409.94L1307.73 359.98L1308.85 359.98L1308.85 329.78L1309.97 329.78L1309.97 258.36L1311.09 258.36L1311.09 350.28L1312.21 350.28L1312.21 381.02L1313.33 381.02L1313.33 403.55L1314.45 403.55L1314.45 435.57L1315.57 435.57L1315.57 403.55L1316.69 403.55L1316.69 403.55L1317.82 403.55L1317.82 403.55L1318.94 403.55L1318.94 417.81L1320.06 417.81L1320.06 375.1L1321.18 375.1L1321.18 356.06L1322.3 356.06L1322.3 296.24L1323.42 296.24L1323.42 342.7L1324.54 342.7L1324.54 344.83L1325.66 344.83L1325.66 383.08L1326.78 383.08L1326.78 391.31L1327.9 391.31L1327.9 405.62L1329.02 405.62L1329.02 367.49L1330.14 367.49L1330.14 315.17L1331.26 315.17L1331.26 390.09L1332.38 390.09L1332.38 383.76L1333.51 383.76L1333.51 360.39L1334.63 360.39L1334.63 367.07L1335.75 367.07L1335.75 373.75L1336.87 373.75L1336.87 376.17L1337.99 376.17L1337.99 369.49L1339.11 369.49L1339.11 362.82L1340.23 362.82L1340.23 353.05L1341.35 353.05L1341.35 365.97L1342.47 365.97L1342.47 378.44L1343.59 378.44L1343.59 402.53L1344.71 402.53L1344.71 403.2L1345.83 403.2L1345.83 360.2L1346.95 360.2L1346.95 372.67L1348.07 372.67L1348.07 358.4L1349.2 358.4L1349.2 407.8L1350.32 407.8L1350.32 561.36L1351.44 561.36L1351.44 561.36L1352.56 561.36L1352.56 561.36L1353.68 561.36L1353.68 580.3ZM1528.51 580.3L1528.51 561.36L1529.63 561.36L1529.63 561.36L1530.75 561.36L1530.75 561.36L1531.87 561.36L1531.87 561.36L1533 561.36L1533 561.36L1534.12 561.36L1534.12 468.43L1535.24 468.43L1535.24 392.58L1536.36 392.58L1536.36 340.42L1537.48 340.42L1537.48 366.57L1538.6 366.57L1538.6 367.09L1539.72 367.09L1539.72 368.73L1540.84 368.73L1540.84 370.36L1541.96 370.36L1541.96 390.77L1543.08 390.77L1543.08 394.27L1544.2 394.27L1544.2 364.11L1545.32 364.11L1545.32 360.18L1546.44 360.18L1546.44 245.74L1547.56 245.74L1547.56 401.35L1548.69 401.35L1548.69 370.97L1549.81 370.97L1549.81 279.84L1550.93 279.84L1550.93 262.5L1552.05 262.5L1552.05 286.39L1553.17 286.39L1553.17 291.77L1554.29 291.77L1554.29 220.49L1555.41 220.49L1555.41 286.31L1556.53 286.31L1556.53 292.65L1557.65 292.65L1557.65 255.56L1558.77 255.56L1558.77 239.42L1559.89 239.42L1559.89 305.36L1561.01 305.36L1561.01 239.42L1562.13 239.42L1562.13 318.39L1563.25 318.39L1563.25 226.8L1564.38 226.8L1564.38 336.3L1565.5 336.3L1565.5 348.08L1566.62 348.08L1566.62 359.86L1567.74 359.86L1567.74 359.65L1568.86 359.65L1568.86 329.45L1569.98 329.45L1569.98 207.86L1571.1 207.86L1571.1 324.14L1572.22 324.14L1572.22 299.46L1573.34 299.46L1573.34 287.16L1574.46 287.16L1574.46 325.51L1575.58 325.51L1575.58 246.35L1576.7 246.35L1576.7 233.26L1577.82 233.26L1577.82 87.92L1578.94 87.92L1578.94 169.99L1580.07 169.99L1580.07 400.8L1581.19 400.8L1581.19 384.33L1582.31 384.33L1582.31 404.61L1583.43 404.61L1583.43 402.35L1584.55 402.35L1584.55 389.52L1585.67 389.52L1585.67 358.7L1586.79 358.7L1586.79 195.24L1587.91 195.24L1587.91 220.49L1589.03 220.49L1589.03 384.36L1590.15 384.36L1590.15 386.13L1591.27 386.13L1591.27 405.97L1592.39 405.97L1592.39 378.16L1593.51 378.16L1593.51 394.4L1594.64 394.4L1594.64 356.22L1595.76 356.22L1595.76 201.55L1596.88 201.55L1596.88 292.69L1598 292.69L1598 262.06L1599.12 262.06L1599.12 163.67L1600.24 163.67L1600.24 286.69L1601.36 286.69L1601.36 233.22L1602.48 233.22L1602.48 294.82L1603.6 294.82L1603.6 238.64L1604.72 238.64L1604.72 182.61L1605.84 182.61L1605.84 261.09L1606.96 261.09L1606.96 306.77L1608.08 306.77L1608.08 349.36L1609.2 349.36L1609.2 386.23L1610.33 386.23L1610.33 403.04L1611.45 403.04L1611.45 401.38L1612.57 401.38L1612.57 375.68L1613.69 375.68L1613.69 386.9L1614.81 386.9L1614.81 397.82L1615.93 397.82L1615.93 429.8L1617.05 429.8L1617.05 440.04L1618.17 440.04L1618.17 423.79L1619.29 423.79L1619.29 438.96L1620.41 438.96L1620.41 428.49L1621.53 428.49L1621.53 421.12L1622.65 421.12L1622.65 289.92L1623.77 289.92L1623.77 324.8L1624.89 324.8L1624.89 354.54L1626.02 354.54L1626.02 373.27L1627.14 373.27L1627.14 360.84L1628.26 360.84L1628.26 409.33L1629.38 409.33L1629.38 414.81L1630.5 414.81L1630.5 376.56L1631.62 376.56L1631.62 371.72L1632.74 371.72L1632.74 389.68L1633.86 389.68L1633.86 283.61L1634.98 283.61L1634.98 384.33L1636.1 384.33L1636.1 368.56L1637.22 368.56L1637.22 340.52L1638.34 340.52L1638.34 331.7L1639.46 331.7L1639.46 214.17L1640.59 214.17L1640.59 286.9L1641.71 286.9L1641.71 341.54L1642.83 341.54L1642.83 365.69L1643.95 365.69L1643.95 368.31L1645.07 368.31L1645.07 386.46L1646.19 386.46L1646.19 373.55L1647.31 373.55L1647.31 376.17L1648.43 376.17L1648.43 378.3L1649.55 378.3L1649.55 378.3L1650.67 378.3L1650.67 416.12L1651.79 416.12L1651.79 378.3L1652.91 378.3L1652.91 409.22L1654.03 409.22L1654.03 353.05L1655.15 353.05L1655.15 394.47L1656.28 394.47L1656.28 416.41L1657.4 416.41L1657.4 428.9L1658.52 428.9L1658.52 431.07L1659.64 431.07L1659.64 403.55L1660.76 403.55L1660.76 415.27L1661.88 415.27L1661.88 433.74L1663 433.74L1663 423.94L1664.12 423.94L1664.12 340.42L1665.24 340.42L1665.24 406.24L1666.36 406.24L1666.36 437.47L1667.48 437.47L1667.48 400.53L1668.6 400.53L1668.6 400.63L1669.72 400.63L1669.72 406.69L1670.84 406.69L1670.84 411.13L1671.97 411.13L1671.97 392.14L1673.09 392.14L1673.09 388.46L1674.21 388.46L1674.21 402.9L1675.33 402.9L1675.33 561.36L1676.45 561.36L1676.45 580.3ZM1851.28 580.3L1851.28 472.83L1852.4 472.83L1852.4 489.74L1853.52 489.74L1853.52 488.3L1854.64 488.3L1854.64 488L1855.77 488L1855.77 467.59L1856.89 467.59L1856.89 473L1858.01 473L1858.01 484.77L1859.13 484.77L1859.13 487.34L1860.25 487.34L1860.25 488.24L1861.37 488.24L1861.37 466.67L1862.49 466.67L1862.49 477.82L1863.61 477.82L1863.61 423.13L1864.73 423.13L1864.73 397.57L1865.85 397.57L1865.85 398.68L1866.97 398.68L1866.97 348.13L1868.09 348.13L1868.09 341.71L1869.21 341.71L1869.21 348.1L1870.33 348.1L1870.33 389.12L1871.46 389.12L1871.46 344.13L1872.58 344.13L1872.58 343.51L1873.7 343.51L1873.7 380.19L1874.82 380.19L1874.82 356.89L1875.94 356.89L1875.94 355.88L1877.06 355.88L1877.06 314.67L1878.18 314.67L1878.18 308.78L1879.3 308.78L1879.3 324.49L1880.42 324.49L1880.42 314.45L1881.54 314.45L1881.54 359.17L1882.66 359.17L1882.66 195.24L1883.78 195.24L1883.78 293.4L1884.9 293.4L1884.9 233.11L1886.02 233.11L1886.02 343.9L1887.15 343.9L1887.15 398.29L1888.27 398.29L1888.27 339.05L1889.39 339.05L1889.39 277.3L1890.51 277.3L1890.51 294.45L1891.63 294.45L1891.63 345.92L1892.75 345.92L1892.75 324.44L1893.87 324.44L1893.87 301.22L1894.99 301.22L1894.99 363.89L1896.11 363.89L1896.11 125.8L1897.23 125.8L1897.23 182.61L1898.35 182.61L1898.35 380.56L1899.47 380.56L1899.47 415.59L1900.59 415.59L1900.59 460.94L1901.71 460.94L1901.71 473.01L1902.84 473.01L1902.84 479.06L1903.96 479.06L1903.96 456.49L1905.08 456.49L1905.08 454.05L1906.2 454.05L1906.2 439.38L1907.32 439.38L1907.32 445.56L1908.44 445.56L1908.44 405.47L1909.56 405.47L1909.56 410.1L1910.68 410.1L1910.68 404.02L1911.8 404.02L1911.8 356.98L1912.92 356.98L1912.92 381.32L1914.04 381.32L1914.04 342L1915.16 342L1915.16 220.49L1916.28 220.49L1916.28 373.4L1917.41 373.4L1917.41 368.62L1918.53 368.62L1918.53 363.28L1919.65 363.28L1919.65 220.49L1920.77 220.49L1920.77 361.55L1921.89 361.55L1921.89 377.51L1923.01 377.51L1923.01 353.05L1924.13 353.05L1924.13 406.83L1925.25 406.83L1925.25 383.18L1926.37 383.18L1926.37 353.05L1927.49 353.05L1927.49 421.63L1928.61 421.63L1928.61 428.77L1929.73 428.77L1929.73 433.48L1930.85 433.48L1930.85 428.73L1931.97 428.73L1931.97 452.82L1933.1 452.82L1933.1 427.63L1934.22 427.63L1934.22 454.31L1935.34 454.31L1935.34 433.58L1936.46 433.58L1936.46 450.8L1937.58 450.8L1937.58 442.15L1938.7 442.15L1938.7 432.1L1939.82 432.1L1939.82 414.33L1940.94 414.33L1940.94 357.15L1942.06 357.15L1942.06 258.36L1943.18 258.36L1943.18 363.79L1944.3 363.79L1944.3 258.36L1945.42 258.36L1945.42 360.45L1946.54 360.45L1946.54 368.58L1947.66 368.58L1947.66 371.37L1948.79 371.37L1948.79 399.77L1949.91 399.77L1949.91 353.84L1951.03 353.84L1951.03 322.1L1952.15 322.1L1952.15 258.36L1953.27 258.36L1953.27 329.78L1954.39 329.78L1954.39 336.28L1955.51 336.28L1955.51 371.19L1956.63 371.19L1956.63 381.86L1957.75 381.86L1957.75 390.24L1958.87 390.24L1958.87 409.62L1959.99 409.62L1959.99 414.3L1961.11 414.3L1961.11 382.65L1962.23 382.65L1962.23 365.5L1963.36 365.5L1963.36 392.77L1964.48 392.77L1964.48 369.36L1965.6 369.36L1965.6 346.27L1966.72 346.27L1966.72 308.86L1967.84 308.86L1967.84 333.84L1968.96 333.84L1968.96 391.17L1970.08 391.17L1970.08 417.67L1971.2 417.67L1971.2 382.43L1972.32 382.43L1972.32 424.75L1973.44 424.75L1973.44 385.74L1974.56 385.74L1974.56 390.92L1975.68 390.92L1975.68 406.01L1976.8 406.01L1976.8 378.3L1977.92 378.3L1977.92 412.22L1979.05 412.22L1979.05 457.59L1980.17 457.59L1980.17 435.89L1981.29 435.89L1981.29 463.05L1982.41 463.05L1982.41 446.56L1983.53 446.56L1983.53 452.46L1984.65 452.46L1984.65 458.35L1985.77 458.35L1985.77 474.99L1986.89 474.99L1986.89 482.08L1988.01 482.08L1988.01 494.77L1989.13 494.77L1989.13 493.31L1990.25 493.31L1990.25 506.01L1991.37 506.01L1991.37 509.94L1992.49 509.94L1992.49 527.1L1993.61 527.1L1993.61 527.99L1994.74 527.99L1994.74 517.17L1995.86 517.17L1995.86 526.01L1996.98 526.01L1996.98 529.58L1998.1 529.58L1998.1 561.36L1999.22 561.36L1999.22 580.3ZM2174.05 580.3L2174.05 573.99L2175.17 573.99L2175.17 567.67L2176.29 567.67L2176.29 567.67L2177.41 567.67L2177.41 567.67L2178.54 567.67L2178.54 573.99L2179.66 573.99L2179.66 567.67L2180.78 567.67L2180.78 567.67L2181.9 567.67L2181.9 548.74L2183.02 548.74L2183.02 523.49L2184.14 523.49L2184.14 390.92L2185.26 390.92L2185.26 384.61L2186.38 384.61L2186.38 359.36L2187.5 359.36L2187.5 353.05L2188.62 353.05L2188.62 390.92L2189.74 390.92L2189.74 409.86L2190.86 409.86L2190.86 409.86L2191.98 409.86L2191.98 403.55L2193.1 403.55L2193.1 365.67L2194.23 365.67L2194.23 239.42L2195.35 239.42L2195.35 277.3L2196.47 277.3L2196.47 220.49L2197.59 220.49L2197.59 226.8L2198.71 226.8L2198.71 239.42L2199.83 239.42L2199.83 334.11L2200.95 334.11L2200.95 214.17L2202.07 214.17L2202.07 226.8L2203.19 226.8L2203.19 315.17L2204.31 315.17L2204.31 403.55L2205.43 403.55L2205.43 365.67L2206.55 365.67L2206.55 327.8L2207.67 327.8L2207.67 258.36L2208.79 258.36L2208.79 226.8L2209.92 226.8L2209.92 270.99L2211.04 270.99L2211.04 226.8L2212.16 226.8L2212.16 283.61L2213.28 283.61L2213.28 384.61L2214.4 384.61L2214.4 378.3L2215.52 378.3L2215.52 409.86L2216.64 409.86L2216.64 416.17L2217.76 416.17L2217.76 359.36L2218.88 359.36L2218.88 353.05L2220 353.05L2220 169.99L2221.12 169.99L2221.12 144.74L2222.24 144.74L2222.24 220.49L2223.36 220.49L2223.36 239.42L2224.48 239.42L2224.48 283.61L2225.61 283.61L2225.61 252.05L2226.73 252.05L2226.73 270.99L2227.85 270.99L2227.85 277.3L2228.97 277.3L2228.97 390.92L2230.09 390.92L2230.09 289.92L2231.21 289.92L2231.21 403.55L2232.33 403.55L2232.33 315.17L2233.45 315.17L2233.45 277.3L2234.57 277.3L2234.57 365.67L2235.69 365.67L2235.69 384.61L2236.81 384.61L2236.81 378.3L2237.93 378.3L2237.93 365.67L2239.05 365.67L2239.05 384.61L2240.18 384.61L2240.18 403.55L2241.3 403.55L2241.3 435.11L2242.42 435.11L2242.42 422.49L2243.54 422.49L2243.54 422.49L2244.66 422.49L2244.66 428.8L2245.78 428.8L2245.78 435.11L2246.9 435.11L2246.9 397.24L2248.02 397.24L2248.02 397.24L2249.14 397.24L2249.14 264.67L2250.26 264.67L2250.26 264.67L2251.38 264.67L2251.38 403.55L2252.5 403.55L2252.5 390.92L2253.62 390.92L2253.62 378.3L2254.74 378.3L2254.74 384.61L2255.87 384.61L2255.87 378.3L2256.99 378.3L2256.99 384.61L2258.11 384.61L2258.11 428.8L2259.23 428.8L2259.23 435.11L2260.35 435.11L2260.35 422.49L2261.47 422.49L2261.47 435.11L2262.59 435.11L2262.59 422.49L2263.71 422.49L2263.71 416.17L2264.83 416.17L2264.83 441.42L2265.95 441.42L2265.95 409.86L2267.07 409.86L2267.07 422.49L2268.19 422.49L2268.19 435.11L2269.31 435.11L2269.31 416.17L2270.43 416.17L2270.43 435.11L2271.56 435.11L2271.56 435.11L2272.68 435.11L2272.68 422.49L2273.8 422.49L2273.8 441.42L2274.92 441.42L2274.92 416.17L2276.04 416.17L2276.04 428.8L2277.16 428.8L2277.16 428.8L2278.28 428.8L2278.28 390.92L2279.4 390.92L2279.4 270.99L2280.52 270.99L2280.52 226.8L2281.64 226.8L2281.64 270.99L2282.76 270.99L2282.76 270.99L2283.88 270.99L2283.88 283.61L2285 283.61L2285 428.8L2286.13 428.8L2286.13 416.17L2287.25 416.17L2287.25 441.42L2288.37 441.42L2288.37 422.49L2289.49 422.49L2289.49 428.8L2290.61 428.8L2290.61 371.99L2291.73 371.99L2291.73 334.11L2292.85 334.11L2292.85 409.86L2293.97 409.86L2293.97 422.49L2295.09 422.49L2295.09 428.8L2296.21 428.8L2296.21 441.42L2297.33 441.42L2297.33 220.49L2298.45 220.49L2298.45 264.67L2299.57 264.67L2299.57 416.17L2300.69 416.17L2300.69 416.17L2301.82 416.17L2301.82 289.92L2302.94 289.92L2302.94 296.24L2304.06 296.24L2304.06 340.42L2305.18 340.42L2305.18 302.55L2306.3 302.55L2306.3 353.05L2307.42 353.05L2307.42 384.61L2308.54 384.61L2308.54 371.99L2309.66 371.99L2309.66 359.36L2310.78 359.36L2310.78 409.86L2311.9 409.86L2311.9 384.61L2313.02 384.61L2313.02 384.61L2314.14 384.61L2314.14 289.92L2315.26 289.92L2315.26 334.11L2316.38 334.11L2316.38 384.61L2317.51 384.61L2317.51 479.3L2318.63 479.3L2318.63 548.74L2319.75 548.74L2319.75 567.67L2320.87 567.67L2320.87 567.67L2321.99 567.67L2321.99 580.3Z" fill="#229072"/></g><line x1="155.4" y1="75.3" x2="155.4" y2="581.3" stroke="#555" stroke-width="2"/><line x1="156.4" y1="581.3" x2="2416.6" y2="581.3" stroke="#707070" stroke-width="1.6"/><line x1="156.5" y1="581.8" x2="156.5" y2="592.3" stroke="#a0a0a0" stroke-width="1"/><line x1="479.5" y1="581.8" x2="479.5" y2="592.3" stroke="#a0a0a0" stroke-width="1"/><line x1="802.5" y1="581.8" x2="802.5" y2="592.3" stroke="#a0a0a0" stroke-width="1"/><line x1="1125.5" y1="581.8" x2="1125.5" y2="592.3" stroke="#a0a0a0" stroke-width="1"/><line x1="1448.5" y1="581.8" x2="1448.5" y2="592.3" stroke="#a0a0a0" stroke-width="1"/><line x1="1771.5" y1="581.8" x2="1771.5" y2="592.3" stroke="#a0a0a0" stroke-width="1"/><line x1="2094.5" y1="581.8" x2="2094.5" y2="592.3" stroke="#a0a0a0" stroke-width="1"/></svg>
<div class="lbl" style="right:2378.5px;top:1309.8px;line-height:20px;font-size:19.5px;transform:scaleX(1.15);transform-origin:100% 50%">0</div>
<div class="lbl" style="right:2378.5px;top:1246.67px;line-height:20px;font-size:19.5px;transform:scaleX(1.15);transform-origin:100% 50%">10</div>
<div class="lbl" style="right:2378.5px;top:1183.55px;line-height:20px;font-size:19.5px;transform:scaleX(1.15);transform-origin:100% 50%">20</div>
<div class="lbl" style="right:2378.5px;top:1120.42px;line-height:20px;font-size:19.5px;transform:scaleX(1.15);transform-origin:100% 50%">30</div>
<div class="lbl" style="right:2378.5px;top:1057.3px;line-height:20px;font-size:19.5px;transform:scaleX(1.15);transform-origin:100% 50%">40</div>
<div class="lbl" style="right:2378.5px;top:994.17px;line-height:20px;font-size:19.5px;transform:scaleX(1.15);transform-origin:100% 50%">50</div>
<div class="lbl" style="right:2378.5px;top:931.05px;line-height:20px;font-size:19.5px;transform:scaleX(1.15);transform-origin:100% 50%">60</div>
<div class="lbl" style="right:2378.5px;top:867.92px;line-height:20px;font-size:19.5px;transform:scaleX(1.15);transform-origin:100% 50%">70</div>
<div class="lbl" style="right:2378.5px;top:804.8px;line-height:20px;font-size:19.5px;transform:scaleX(1.15);transform-origin:100% 50%">80</div>
<div class="lbl" style="left:86.4px;top:1340px;width:140px;text-align:center;color:#000;font-size:19.5px;line-height:20px;transform:scaleX(1.17)">ven. 10</div>
<div class="lbl" style="left:409.29px;top:1340px;width:140px;text-align:center;color:#000;font-size:19.5px;line-height:20px;transform:scaleX(1.17)">sam. 11</div>
<div class="lbl" style="left:732.17px;top:1340px;width:140px;text-align:center;color:#000;font-size:19.5px;line-height:20px;transform:scaleX(1.17)">dim. 12</div>
<div class="lbl" style="left:1055.06px;top:1340px;width:140px;text-align:center;color:#000;font-size:19.5px;line-height:20px;transform:scaleX(1.17)">lun. 13</div>
<div class="lbl" style="left:1377.94px;top:1340px;width:140px;text-align:center;color:#000;font-size:19.5px;line-height:20px;transform:scaleX(1.17)">mar. 14</div>
<div class="lbl" style="left:1700.83px;top:1340px;width:140px;text-align:center;color:#000;font-size:19.5px;line-height:20px;transform:scaleX(1.17)">mer. 15</div>
<div class="lbl" style="left:2023.71px;top:1340px;width:140px;text-align:center;color:#000;font-size:19.5px;line-height:20px;transform:scaleX(1.17)">jeu. 16</div>
<div class="lbl" style="left:62px;top:1055px;width:30px;height:24px;line-height:24px;text-align:center;transform:rotate(-90deg);font-size:22.5px;color:#3a3a3a">kW</div>
<div class="abs" style="left:1990px;top:67px;width:416px;height:31px;background:#fff;border-radius:0 0 10px 10px;box-shadow:2px 2px 3px rgba(0,0,0,0.08);"></div>
<div class="abs" style="left:1990px;top:65px;width:415px;text-align:center;font-weight:bold;font-size:24px;line-height:31px;color:#000;letter-spacing:1px;text-indent:2px">LHB-site-L638</div>
<div class="box" style="left:1990px;top:106px;width:416px;height:61px;line-height:57px;font-size:28px;text-indent:19px">Consommation: 377 kWh</div>
<div class="box" style="left:1990px;top:176px;width:416px;height:61px;line-height:57px;font-size:28px;text-indent:19px">P Max :&nbsp; 69 kW</div>
<div class="box" style="left:1990px;top:246px;width:416px;height:61px;line-height:57px;font-size:28px;text-indent:19px">P min : 0 kW</div>
<div class="box" style="left:561px;top:805px;width:416px;height:61px;line-height:57px;font-size:28px;text-indent:19px">Consommation: 2 138 kWh</div>
<div class="box" style="left:1098px;top:805px;width:416px;height:61px;line-height:57px;font-size:28px;text-indent:19px">P Max :&nbsp; 78 kW</div>
<div class="box" style="left:1608px;top:805px;width:416px;height:61px;line-height:57px;font-size:28px;text-indent:19px">P min : 0 kW</div>
<div class="abs" style="left:1048px;top:542px;width:522px;height:70px;border-radius:11px;background:rgba(255,255,255,0.9);"></div>
<div class="abs" style="left:1058px;top:542px;width:512px;height:70px;text-align:center;font-weight:bold;font-size:28px;line-height:72px;color:#061410;transform:scaleX(1.18);transform-origin:50% 50%">jeudi 16 avril 2026</div>
<div class="abs" style="left:177px;top:49px;width:481px;height:78px;background:#0a0a18"></div>
<svg class="abs" style="left:0;top:0" width="700" height="140">
<defs><linearGradient id="eg" gradientUnits="userSpaceOnUse" x1="0" y1="300" x2="0" y2="650"><stop offset="0" stop-color="#00f2cc"/><stop offset="0.5" stop-color="#00ecc6"/><stop offset="0.52" stop-color="#00b89a"/><stop offset="1" stop-color="#00c8a6"/></linearGradient></defs>
<g transform="translate(176,48) scale(0.09718)" fill="none" stroke-linecap="round" stroke-linejoin="round">
<g stroke="url(#eg)" stroke-width="72">
<path d="M363 455 A98 124 0 1 0 329 575"/><path d="M190 452 L363 452" stroke-width="42" stroke-linecap="butt"/>
<path d="M245 275 L300 250" stroke-width="55"/>
<path d="M627 400 A94 124 0 1 0 627 560"/>
<ellipse cx="838" cy="480" rx="102" ry="124"/>
</g>
<g stroke="#ffffff" stroke-width="72">
<path d="M1030 395 L1108 605 L1190 350 L1270 605 L1418 205"/>
<path d="M1440 385 Q1500 340 1545 340 Q1640 345 1640 450 L1640 600"/>
<ellipse cx="1535" cy="545" rx="100" ry="68"/>
<path d="M1752 270 L1752 560 Q1752 610 1810 612"/>
<path d="M1912 270 L1912 560 Q1912 610 1975 612"/>
<path d="M1712 345 L2000 345" stroke-linecap="round"/>
</g>
</g>
</svg>
<svg class="abs" style="left:177px;top:49px" width="481" height="78">
<ellipse cx="256.5" cy="40" rx="26" ry="28" fill="#00b4e2"/>
<text x="256" y="48" text-anchor="middle" font-family="Liberation Sans" font-size="22" fill="#fff" letter-spacing="-1.5">Rte</text>
<text x="291" y="29" font-family="Liberation Sans" font-weight="bold" font-size="10" fill="#0096cc" textLength="48">Le réseau</text>
<text x="291" y="42" font-family="Liberation Sans" font-weight="bold" font-size="10" fill="#0096cc" textLength="60">de transport</text>
<text x="291" y="55" font-family="Liberation Sans" font-weight="bold" font-size="10" fill="#0096cc" textLength="57">d’électricité</text>
<rect x="369" y="12" width="101" height="56" fill="#fff"/>
<rect x="376" y="20" width="8" height="7" fill="#2a3f9a"/><rect x="386" y="20" width="7" height="7" fill="#e5343a"/>
<text x="376" y="36" font-family="Liberation Sans" font-weight="bold" font-size="6.5" fill="#333" textLength="42">RÉPUBLIQUE</text>
<text x="376" y="43" font-family="Liberation Sans" font-weight="bold" font-size="6.5" fill="#333" textLength="40">FRANÇAISE</text>
<rect x="377" y="48" width="12" height="1" fill="#bbb"/><rect x="377" y="53" width="12" height="1" fill="#bbb"/><rect x="377" y="58" width="16" height="1" fill="#bbb"/>
<rect x="430" y="15" width="35" height="49" fill="none" stroke="#3a6fc0" stroke-width="1.2"/>
<text x="447.5" y="23.5" text-anchor="middle" font-family="Liberation Sans" font-weight="bold" font-size="6" fill="#e0302f" textLength="24">ADEME</text>
<circle cx="447.5" cy="37" r="8" fill="#2c58b0"/>
<rect x="437" y="49" width="21" height="1.6" fill="#f07070"/><rect x="437" y="52.5" width="21" height="1.6" fill="#f07070"/><rect x="437" y="56" width="21" height="1.6" fill="#f07070"/>
</svg>
<div class="abs" style="left:169px;top:136px;width:492px;height:123px;box-sizing:border-box;border:3px solid #dcdcdc;"></div>
<div class="abs" style="left:172px;top:139px;width:117.5px;height:50px;box-sizing:border-box;border:2.5px solid #e6e6e6;border-bottom:0"></div>
<div class="abs" style="left:172px;top:194.5px;width:117.5px;height:61px;box-sizing:border-box;border:2.5px solid #e6e6e6;border-top:0"></div>
<div class="abs" style="left:294.5px;top:139px;width:117px;height:50px;box-sizing:border-box;border:2.5px solid #e6e6e6;border-bottom:0"></div>
<div class="abs" style="left:294.5px;top:194.5px;width:117px;height:61px;box-sizing:border-box;border:2.5px solid #e6e6e6;border-top:0"></div>
<div class="abs" style="left:416.5px;top:139px;width:117px;height:50px;box-sizing:border-box;border:2.5px solid #e6e6e6;border-bottom:0"></div>
<div class="abs" style="left:416.5px;top:194.5px;width:117px;height:61px;box-sizing:border-box;border:2.5px solid #e6e6e6;border-top:0"></div>
<div class="abs" style="left:538.5px;top:139px;width:119.5px;height:50px;box-sizing:border-box;border:2.5px solid #e6e6e6;border-bottom:0"></div>
<div class="abs" style="left:538.5px;top:194.5px;width:119.5px;height:61px;box-sizing:border-box;border:2.5px solid #e6e6e6;border-top:0"></div>
<div class="abs" style="left:289.5px;top:139px;width:5px;height:117px;background:#dcdcdc"></div>
<div class="abs" style="left:411.5px;top:139px;width:5px;height:117px;background:#dcdcdc"></div>
<div class="abs" style="left:533.5px;top:139px;width:5px;height:117px;background:#dcdcdc"></div>
<div class="abs" style="left:172px;top:189px;width:486px;height:5.7px;background:#dcdcdc"></div>
<svg class="abs" style="left:180px;top:195px" width="106" height="55" viewBox="0 0 106 56" preserveAspectRatio="none">
<defs><linearGradient id="tg0" x1="0" y1="0" x2="0" y2="1"><stop offset="0" stop-color="#00d4b2"/><stop offset="1" stop-color="#00b898"/></linearGradient></defs>
<rect width="106" height="56" fill="url(#tg0)"/>
<path d="M14 0 C35 12 55 24 72 24 C86 24 98 19 106 16 L106 0 Z" fill="#00f0cc"/>
<path d="M29 0 C42 8 52 11 63 11 C80 11 96 5 106 2 L106 0 Z" fill="#00a08a"/>
</svg>
<svg class="abs" style="left:302px;top:196px" width="106" height="56" viewBox="0 0 106 56" preserveAspectRatio="none">
<defs><linearGradient id="tg1" x1="0" y1="0" x2="0" y2="1"><stop offset="0" stop-color="#00d4b2"/><stop offset="1" stop-color="#00b898"/></linearGradient></defs>
<rect width="106" height="56" fill="url(#tg1)"/>
<path d="M14 0 C35 12 55 24 72 24 C86 24 98 19 106 16 L106 0 Z" fill="#00f0cc"/>
<path d="M29 0 C42 8 52 11 63 11 C80 11 96 5 106 2 L106 0 Z" fill="#00a08a"/>
</svg>
<svg class="abs" style="left:424px;top:196px" width="106" height="56" viewBox="0 0 106 56" preserveAspectRatio="none">
<defs><linearGradient id="tg2" x1="0" y1="0" x2="0" y2="1"><stop offset="0" stop-color="#00d4b2"/><stop offset="1" stop-color="#00b898"/></linearGradient></defs>
<rect width="106" height="56" fill="url(#tg2)"/>
<path d="M14 0 C35 12 55 24 72 24 C86 24 98 19 106 16 L106 0 Z" fill="#00f0cc"/>
<path d="M29 0 C42 8 52 11 63 11 C80 11 96 5 106 2 L106 0 Z" fill="#00a08a"/>
</svg>
<svg class="abs" style="left:544px;top:196px" width="106" height="56" viewBox="0 0 106 56" preserveAspectRatio="none">
<defs><linearGradient id="tg3" x1="0" y1="0" x2="0" y2="1"><stop offset="0" stop-color="#00d4b2"/><stop offset="1" stop-color="#00b898"/></linearGradient></defs>
<rect width="106" height="56" fill="url(#tg3)"/>
<path d="M14 0 C35 12 55 24 72 24 C86 24 98 19 106 16 L106 0 Z" fill="#00f0cc"/>
<path d="M29 0 C42 8 52 11 63 11 C80 11 96 5 106 2 L106 0 Z" fill="#00a08a"/>
</svg>
<svg class="abs" style="left:0;top:0" width="700" height="200">
<text x="231.2" y="175" text-anchor="middle" font-family="Liberation Sans" font-size="33"  fill="#111">J</text>
<text x="321.3" y="175" text-anchor="middle" font-family="Liberation Sans" font-size="33"  fill="#111">J</text>
<text x="443" y="175" text-anchor="middle" font-family="Liberation Sans" font-size="33"  fill="#111">J</text>
<text x="564.8" y="175" text-anchor="middle" font-family="Liberation Sans" font-size="33"  fill="#111">J</text>
<text x="353.9" y="175" text-anchor="middle" font-family="Liberation Sans" font-size="33"  fill="#111">+</text>
<text x="475.5" y="175" text-anchor="middle" font-family="Liberation Sans" font-size="33"  fill="#111">+</text>
<text x="598" y="175" text-anchor="middle" font-family="Liberation Sans" font-size="33"  fill="#111">+</text>
<text x="384.9" y="175" text-anchor="middle" font-family="Liberation Sans" font-size="33"  fill="#111">1</text>
<text x="508" y="175" text-anchor="middle" font-family="Liberation Sans" font-size="33" font-weight="bold" fill="#111">2</text>
<text x="630.8" y="175" text-anchor="middle" font-family="Liberation Sans" font-size="33"  fill="#111">3</text>
</svg>
<div class="abs" style="left:2322px;top:1322px;width:116px;height:56px;background:#fff"></div>
<svg class="abs" style="left:0;top:0" width="2511" height="1415">
<g transform="translate(2300,1290) scale(0.08834)">
<g fill="none" stroke="#1f70b8" stroke-width="64">
<path d="M682 601 A140 140 0 1 0 690 696"/>
<path d="M560 690 L692 690" stroke-linecap="butt"/>
<path d="M792 650 Q792 575 870 575 Q945 578 945 645 Q940 700 800 800 L975 800" stroke-linecap="butt" stroke-linejoin="miter"/><circle cx="792" cy="650" r="32" fill="#1f70b8" stroke="none"/>
</g>
<path d="M1045 395 L1055 530 L1128 552 L1008 830 L1030 610 L948 548 Z" fill="#e8572a"/>
<path d="M1170 555 L1410 555 L1350 620 L1140 620 Z M1110 658 L1340 658 L1282 725 L1080 725 Z M1075 762 L1325 762 L1265 830 L1050 830 Z" fill="#f29324"/>
<text x="1062" y="505" font-family="Liberation Sans" font-weight="bold" font-size="86" fill="#e8572a" textLength="338">FRANCE</text>
<text x="450" y="880" font-family="Liberation Sans" font-size="36" fill="#3a82c8" textLength="840">Optimisation des ressources énergétiques</text>
</g>
</svg>
</body></html>
